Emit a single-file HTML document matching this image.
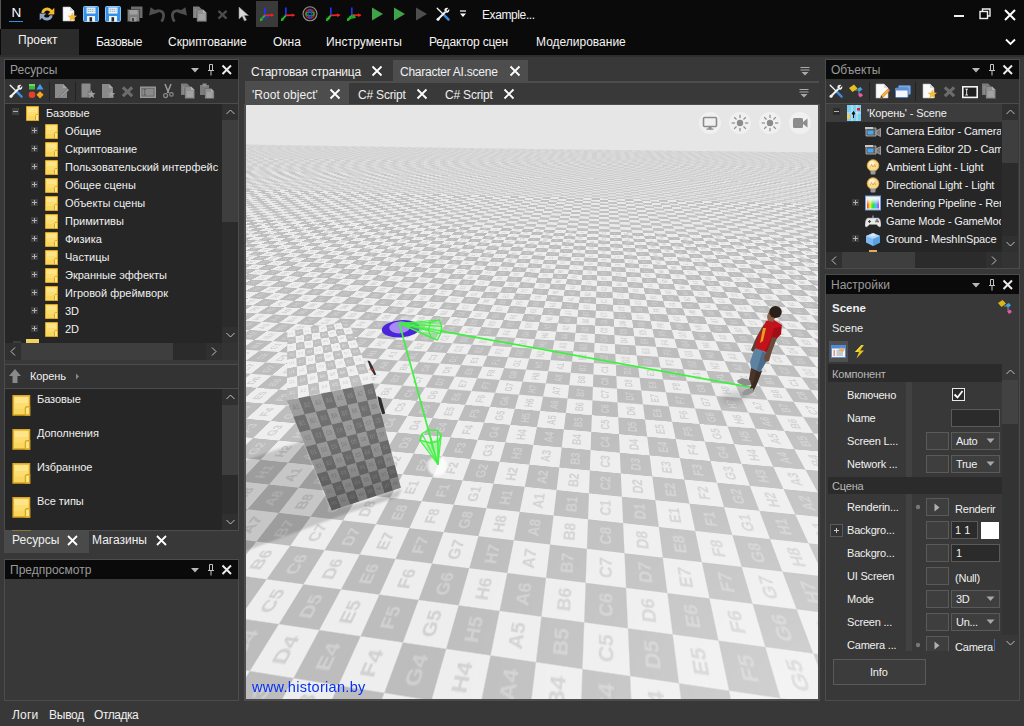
<!DOCTYPE html>
<html><head><meta charset="utf-8"><title>Editor</title>
<style>
html,body{margin:0;padding:0}
body{width:1024px;height:726px;overflow:hidden;background:#383838;position:relative;font-family:"Liberation Sans",sans-serif;font-size:11px;color:#f0f0f0}
div,span,svg{position:absolute;display:block}
.t{white-space:nowrap;line-height:16px;height:16px}
.bx p{position:relative;display:block;margin:0;height:16px;white-space:nowrap;font-size:0}
.bx b{position:relative;display:inline-block;width:16px;height:16px;line-height:16px;text-align:center;font-size:7px;font-weight:bold}
.lf p{position:relative;display:block;margin:0;height:14px;white-space:nowrap;font-size:0}
.lf b{position:relative;display:inline-block;width:14px;height:14px;line-height:14px;text-align:center;font-size:6.5px;color:#d0d0d0;font-weight:bold}
.lb p{position:relative;display:block;margin:0;height:32px;white-space:nowrap;font-size:0}
.lb b{position:relative;display:inline-block;width:32px;height:32px;line-height:32px;text-align:center;font-size:15px;color:#d0d0d0;font-weight:bold}
</style></head><body>
<div style="left:0px;top:0px;width:1024px;height:56px;background:#0a0a0a;"></div>
<div style="left:0px;top:0px;width:1px;height:29px;background:#555;"></div>
<span class="t" style="left:11.5px;top:5px;font-size:13.5px;color:#fff;">N</span>
<div style="left:9px;top:21px;width:14px;height:1px;background:#2f8fe8;"></div>
<svg style="left:38px;top:5px;" width="18" height="18" viewBox="0 0 16 16"><path d="M3 7 A5.2 5.2 0 0 1 12.5 4.5 L14.5 2.5 V8.5 H8.5 L10.8 6.2 A3 3 0 0 0 5.4 7 Z" fill="#f5b829"/><path d="M13 9 A5.2 5.2 0 0 1 3.5 11.5 L1.5 13.5 V7.5 H7.5 L5.2 9.8 A3 3 0 0 0 10.6 9 Z" fill="#8fa6c4"/></svg>
<svg style="left:61px;top:6px;" width="16" height="16" viewBox="0 0 16 16"><path d="M2 1 H9 L13 5 V15 H2 Z" fill="#fafafa" stroke="#bdbdbd" stroke-width=".6"/><path d="M9 1 V5 H13 Z" fill="#d8d8d8"/><polygon points="11.30,6.30 12.60,9.42 15.96,9.69 13.40,11.88 14.18,15.16 11.30,13.40 8.42,15.16 9.20,11.88 6.64,9.69 10.00,9.42" fill="#f6b93a"/></svg>
<svg style="left:83px;top:6px;" width="16" height="16" viewBox="0 0 16 16"><rect x="0.5" y="0.5" width="15" height="15" rx="1" fill="#3592e6" stroke="#86c4f6" stroke-width="1"/><rect x="3.5" y="1.5" width="9" height="6" fill="#f2f7fc"/><path d="M4.5 3.3 H11.5 M4.5 5.3 H11.5" stroke="#8a98a8" stroke-width=".9" stroke-dasharray="1.6 .5"/><rect x="4" y="10" width="8" height="5.5" fill="#eef3f8"/><rect x="6.5" y="11.2" width="2.6" height="4.3" fill="#262626"/></svg>
<svg style="left:105px;top:6px;" width="16" height="16" viewBox="0 0 16 16"><rect x="0.5" y="0.5" width="15" height="15" rx="1" fill="#3592e6" stroke="#86c4f6" stroke-width="1"/><rect x="3.5" y="1.5" width="9" height="6" fill="#f2f7fc"/><path d="M4.5 3.3 H11.5 M4.5 5.3 H11.5" stroke="#8a98a8" stroke-width=".9" stroke-dasharray="1.6 .5"/><rect x="4" y="10" width="8" height="5.5" fill="#eef3f8"/><rect x="6.5" y="11.2" width="2.6" height="4.3" fill="#262626"/></svg>
<svg style="left:127px;top:6px;" width="16" height="16" viewBox="0 0 16 16"><rect x="4" y="0.5" width="11.5" height="11.5" fill="#6c6c6c"/><rect x="0.5" y="3.5" width="12" height="12" fill="#7e7e7e" stroke="#333" stroke-width=".6"/><rect x="2.5" y="4" width="8" height="4.5" fill="#a0a0a0"/><rect x="3.5" y="11" width="6" height="4.5" fill="#999"/><rect x="5" y="12" width="2" height="3.5" fill="#444"/></svg>
<svg style="left:149px;top:6px;" width="16" height="16" viewBox="0 0 16 16"><path d="M5 6.5 C 9 3.2, 15 4.5, 14.6 10 C 14.4 12.5, 13.6 14, 12.6 15.6" stroke="#4e4e4e" stroke-width="2.7" fill="none"/><polygon points="0,9.6 1.6,1.2 9.6,6.6" fill="#4e4e4e"/></svg>
<svg style="left:171px;top:6px;" width="16" height="16" viewBox="0 0 16 16"><path d="M11 6.5 C 7 3.2, 1 4.5, 1.4 10 C 1.6 12.5, 2.4 14, 3.4 15.6" stroke="#4e4e4e" stroke-width="2.7" fill="none"/><polygon points="16,9.6 14.4,1.2 6.4,6.6" fill="#4e4e4e"/></svg>
<svg style="left:192px;top:6px;" width="16" height="16" viewBox="0 0 16 16"><path d="M1 0.5 H7 L10 3.5 V12 H1 Z" fill="#7c7c7c"/><path d="M2.5 4 H6 M2.5 6 H4 M2.5 8 H4 M2.5 10 H4" stroke="#a8a8a8" stroke-width=".7"/><path d="M5 3.5 H11 L14.5 7 V15.5 H5 Z" fill="#909090" stroke="#5c5c5c" stroke-width=".5"/><path d="M11 3.5 V7 H14.5 Z" fill="#b0b0b0"/><path d="M6.5 9 H13 M6.5 11 H13 M6.5 13 H13" stroke="#bcbcbc" stroke-width=".8"/></svg>
<svg style="left:216px;top:8px;" width="13" height="13" viewBox="0 0 16 16"><path d="M3 3.5 L13 13 M13 3.5 L3 13" stroke="#4c4c4c" stroke-width="2.8" fill="none"/></svg>
<svg style="left:236px;top:6px;" width="16" height="16" viewBox="0 0 16 16"><path d="M3 1 L3 13 L6.2 10.2 L8.5 15 L10.5 14 L8.2 9.5 L12.5 9.5 Z" fill="#d8d8d8" stroke="#888" stroke-width=".6"/></svg>
<div style="left:256px;top:1px;width:22px;height:26px;background:#3a3a3a;"></div>
<svg style="left:259px;top:6px;" width="16" height="16" viewBox="0 0 16 16"><path d="M5.8 9.4 L5.8 1.5" stroke="#2233ff" stroke-width="1.7"/><path d="M5.8 9.4 L14.2 9.2" stroke="#ee2222" stroke-width="1.7"/><path d="M12 7.6 L15 9.2 L12 10.8 Z" fill="#ee2222"/><path d="M5.8 9.4 L1.6 14.4" stroke="#22bb22" stroke-width="1.9"/><path d="M0.8 15.2 L1.6 11.8 L4 14 Z" fill="#22bb22"/><path d="M3.5 12.5 Q8 12.5 10.5 9.8" stroke="#2233ff" stroke-width="1" fill="none"/></svg>
<svg style="left:280px;top:6px;" width="16" height="16" viewBox="0 0 16 16"><path d="M5.8 9.4 L5.8 1.5" stroke="#2233ff" stroke-width="1.7"/><path d="M5.8 9.4 L14.2 9.2" stroke="#ee2222" stroke-width="1.7"/><path d="M12 7.6 L15 9.2 L12 10.8 Z" fill="#ee2222"/><path d="M5.8 9.4 L1.6 14.4" stroke="#22bb22" stroke-width="1.9"/><path d="M0.8 15.2 L1.6 11.8 L4 14 Z" fill="#22bb22"/></svg>
<svg style="left:302px;top:6px;" width="16" height="16" viewBox="0 0 16 16"><circle cx="8" cy="7.8" r="7" fill="#181818" stroke="#909090" stroke-width="1.1"/><circle cx="8" cy="8" r="4.2" fill="none" stroke="#cc2222" stroke-width="1.4"/><ellipse cx="8" cy="8" rx="4" ry="1.8" fill="none" stroke="#22aa22" stroke-width="1.2"/><ellipse cx="8" cy="8" rx="1.8" ry="4" fill="none" stroke="#2244ee" stroke-width="1.2"/></svg>
<svg style="left:325px;top:6px;" width="16" height="16" viewBox="0 0 16 16"><path d="M5.8 9.4 L5.8 1.5" stroke="#2233ff" stroke-width="1.7"/><path d="M5.8 9.4 L14.2 9.2" stroke="#ee2222" stroke-width="1.7"/><path d="M12 7.6 L15 9.2 L12 10.8 Z" fill="#ee2222"/><path d="M5.8 9.4 L1.6 14.4" stroke="#22bb22" stroke-width="1.9"/><path d="M0.8 15.2 L1.6 11.8 L4 14 Z" fill="#22bb22"/><path d="M1 14 L4 10 L5.5 13 Z" fill="#22bb22"/><path d="M12 7.5 L15.5 9 L12.5 11 Z" fill="#ee2222"/></svg>
<svg style="left:346px;top:6px;" width="16" height="16" viewBox="0 0 16 16"><path d="M5.8 9.4 L5.8 1.5" stroke="#2233ff" stroke-width="1.7"/><path d="M5.8 9.4 L14.2 9.2" stroke="#ee2222" stroke-width="1.7"/><path d="M12 7.6 L15 9.2 L12 10.8 Z" fill="#ee2222"/><path d="M5.8 9.4 L1.6 14.4" stroke="#22bb22" stroke-width="1.9"/><path d="M0.8 15.2 L1.6 11.8 L4 14 Z" fill="#22bb22"/><path d="M1 14 L4 10 L5.5 13 Z" fill="#22bb22"/><path d="M12 7.5 L15.5 9 L12.5 11 Z" fill="#ee2222"/><path d="M4 13 L8 8 L10 12 Z" fill="#22aa22"/></svg>
<svg style="left:369px;top:6px;" width="16" height="16" viewBox="0 0 16 16"><path d="M3 1.5 L14 8 L3 14.5 Z" fill="#3fa34a"/></svg>
<svg style="left:391px;top:6px;" width="16" height="16" viewBox="0 0 16 16"><path d="M3 1.5 L14 8 L3 14.5 Z" fill="#3fa34a"/></svg>
<svg style="left:413px;top:6px;" width="16" height="16" viewBox="0 0 16 16"><path d="M3 1.5 L14 8 L3 14.5 Z" fill="#4e4e4e"/></svg>
<svg style="left:435px;top:6px;" width="16" height="16" viewBox="0 0 16 16"><path d="M2.2 2.2 L9.5 9.5" stroke="#f4f4f4" stroke-width="1.3" stroke-linecap="round"/><path d="M9.2 9.2 L13.6 13.6" stroke="#3b8ee0" stroke-width="2.4" stroke-linecap="round"/><path d="M3 13.2 L10 6.2" stroke="#f4f4f4" stroke-width="2" stroke-linecap="round"/><path d="M9.2 4.2 A3 3 0 0 1 13.4 2 L11.4 4 L12.2 5 L14.2 3 A3 3 0 0 1 11.8 7 Z" fill="#f4f4f4"/><circle cx="3" cy="13.2" r="1.5" fill="#f4f4f4"/></svg>
<svg style="left:459px;top:10px;" width="8" height="8" viewBox="0 0 8 8"><path d="M1 1 H7" stroke="#fff" stroke-width="1.2"/><path d="M1 3.5 H7 L4 7 Z" fill="#fff"/></svg>
<span class="t" style="left:482px;top:7px;font-size:12px;color:#f2f2f2;letter-spacing:-0.4px;">Example...</span>
<div style="left:954px;top:15px;width:10px;height:2px;background:#f0f0f0;"></div>
<svg style="left:979px;top:8px;" width="12" height="12" viewBox="0 0 12 12"><rect x="1" y="3.5" width="7.5" height="7" fill="none" stroke="#f0f0f0" stroke-width="1.4"/><path d="M3.5 3 V1 H11 V8 H9" fill="none" stroke="#f0f0f0" stroke-width="1.4"/></svg>
<svg style="left:1004px;top:9px;" width="12" height="12" viewBox="0 0 12 12"><path d="M1 1 L11 11 M11 1 L1 11" stroke="#fff" stroke-width="2"/></svg>
<div style="left:1px;top:29px;width:78px;height:26px;background:#2b2b2b;"></div>
<span class="t" style="left:18px;top:32px;font-size:12px;color:#f4f4f4;">Проект</span>
<span class="t" style="left:96px;top:34px;font-size:12px;color:#f4f4f4;letter-spacing:-0.3px;">Базовые</span>
<span class="t" style="left:168px;top:34px;font-size:12px;color:#f4f4f4;letter-spacing:0px;">Скриптование</span>
<span class="t" style="left:273px;top:34px;font-size:12px;color:#f4f4f4;letter-spacing:0px;">Окна</span>
<span class="t" style="left:326px;top:34px;font-size:12px;color:#f4f4f4;letter-spacing:0.1px;">Инструменты</span>
<span class="t" style="left:429px;top:34px;font-size:12px;color:#f4f4f4;letter-spacing:-0.15px;">Редактор сцен</span>
<span class="t" style="left:536px;top:34px;font-size:12px;color:#f4f4f4;letter-spacing:0px;">Моделирование</span>
<svg style="left:1005px;top:38px;" width="11" height="8" viewBox="0 0 11 8"><path d="M1 1.5 L5.5 6 L10 1.5" stroke="#fff" stroke-width="1.8" fill="none"/></svg>
<div style="left:0px;top:55px;width:1024px;height:2px;background:#2e2e2e;"></div>
<div style="left:4px;top:59px;width:235px;height:472px;border:1px solid #4c4c4c;box-sizing:border-box;"></div>
<div style="left:5px;top:60px;width:233px;height:19px;background:#0a0a0a;"></div>
<span class="t" style="left:10px;top:62px;font-size:12px;color:#9a9a9a;">Ресурсы</span>
<svg style="left:190px;top:66px;" width="10" height="8" viewBox="0 0 10 8"><path d="M1 2 H9 L5 6.5 Z" fill="#b8b8b8"/></svg>
<svg style="left:207px;top:63px;" width="8" height="13" viewBox="0 0 8 13"><path d="M2.5 1.5 H5.5 V7.5 H2.5 Z M1 7.5 H7 M4 7.5 V12.5" stroke="#c4c4c4" stroke-width="1" fill="none"/></svg>
<svg style="left:221px;top:64px;" width="12" height="12" viewBox="0 0 12 12"><path d="M1.5 1.5 L10 10 M10 1.5 L1.5 10" stroke="#ececec" stroke-width="2" fill="none"/></svg>
<div style="left:5px;top:79px;width:233px;height:25px;background:#333333;"></div>
<div style="left:5px;top:103px;width:233px;height:1px;background:#4c4c4c;"></div>
<svg style="left:8px;top:83px;" width="16" height="16" viewBox="0 0 16 16"><path d="M2.2 2.2 L9.5 9.5" stroke="#f4f4f4" stroke-width="1.3" stroke-linecap="round"/><path d="M9.2 9.2 L13.6 13.6" stroke="#3b8ee0" stroke-width="2.4" stroke-linecap="round"/><path d="M3 13.2 L10 6.2" stroke="#f4f4f4" stroke-width="2" stroke-linecap="round"/><path d="M9.2 4.2 A3 3 0 0 1 13.4 2 L11.4 4 L12.2 5 L14.2 3 A3 3 0 0 1 11.8 7 Z" fill="#f4f4f4"/><circle cx="3" cy="13.2" r="1.5" fill="#f4f4f4"/></svg>
<svg style="left:28px;top:83px;" width="16" height="16" viewBox="0 0 16 16"><rect x="1" y="1" width="6" height="5.5" fill="#3fb63f"/><rect x="1" y="1" width="6" height="2" fill="#6fd66f"/><path d="M12 0.8 L15.6 6.5 L8.4 6.5 Z" fill="#3a9df0"/><circle cx="4" cy="11.8" r="3.3" fill="#e8402a"/><path d="M12 8.2 L15.6 11.8 L12 15.4 L8.4 11.8 Z" fill="#f4a81e"/></svg>
<div style="left:49px;top:82px;width:1px;height:19px;background:#222;"></div>
<div style="left:75px;top:82px;width:1px;height:19px;background:#222;"></div>
<svg style="left:53px;top:83px;" width="16" height="16" viewBox="0 0 16 16"><path d="M2 1 H10 L14 5 V15 H2 Z" fill="#8a8a8a"/><path d="M10 1 V5 H14" fill="#a5a5a5"/><path d="M7 13 L14.5 5.5 L16 7 L8.5 14.5 L6.5 15 Z" fill="#9a9a9a" stroke="#6a6a6a" stroke-width=".6"/></svg>
<svg style="left:80px;top:83px;" width="16" height="16" viewBox="0 0 16 16"><path d="M1.5 0.5 H10.5 V14.5 H1.5 Z" fill="#8c8c8c"/><path d="M8.5 8 H10.5 V14.5 H7.5 V9 Z" fill="#7a7a7a"/><polygon points="11.50,7.20 12.64,9.93 15.59,10.17 13.34,12.10 14.03,14.98 11.50,13.44 8.97,14.98 9.66,12.10 7.41,10.17 10.36,9.93" fill="#a0a0a0"/></svg>
<svg style="left:100px;top:83px;" width="16" height="16" viewBox="0 0 16 16"><path d="M2 1 H9 L13 5 V15 H2 Z" fill="#8a8a8a"/><path d="M9 1 V5 H13 Z" fill="#a5a5a5"/><polygon points="11.50,7.50 12.56,10.04 15.30,10.26 13.21,12.06 13.85,14.74 11.50,13.30 9.15,14.74 9.79,12.06 7.70,10.26 10.44,10.04" fill="#a0a0a0"/></svg>
<svg style="left:120px;top:84px;" width="15" height="15" viewBox="0 0 16 16"><path d="M3 3.5 L13 13 M13 3.5 L3 13" stroke="#6c6c6c" stroke-width="3.3" fill="none"/></svg>
<svg style="left:140px;top:84px;" width="16" height="16" viewBox="0 0 16 16"><rect x="0.5" y="3" width="15" height="10.5" fill="#8a8a8a" stroke="#9a9a9a" stroke-width="1"/><rect x="2" y="4.5" width="12" height="7.5" fill="none" stroke="#555" stroke-width=".5"/><path d="M3.5 5.5 H6 M3.5 11 H6 M4.75 5.5 V11" stroke="#555" stroke-width=".8" fill="none"/></svg>
<svg style="left:160px;top:83px;" width="16" height="16" viewBox="0 0 16 16"><path d="M5 1 L8.6 10 M11 1 L7.4 10" stroke="#9a9a9a" stroke-width="1.5" fill="none"/><circle cx="5.6" cy="12.6" r="2" fill="none" stroke="#8a8a8a" stroke-width="1.2"/><circle cx="11.4" cy="11.4" r="1.8" fill="none" stroke="#8a8a8a" stroke-width="1.2"/></svg>
<svg style="left:180px;top:83px;" width="16" height="16" viewBox="0 0 16 16"><path d="M1 0.5 H7 L10 3.5 V12 H1 Z" fill="#7c7c7c"/><path d="M2.5 4 H6 M2.5 6 H4 M2.5 8 H4 M2.5 10 H4" stroke="#a8a8a8" stroke-width=".7"/><path d="M5 3.5 H11 L14.5 7 V15.5 H5 Z" fill="#909090" stroke="#5c5c5c" stroke-width=".5"/><path d="M11 3.5 V7 H14.5 Z" fill="#b0b0b0"/><path d="M6.5 9 H13 M6.5 11 H13 M6.5 13 H13" stroke="#bcbcbc" stroke-width=".8"/></svg>
<svg style="left:199px;top:83px;" width="16" height="16" viewBox="0 0 16 16"><path d="M1 2 H10 V12 H1 Z" fill="#7c7c7c"/><rect x="3.5" y="0.5" width="4" height="3" fill="#909090"/><path d="M6 5.5 H12 L15 8.5 V15.5 H6 Z" fill="#909090" stroke="#5c5c5c" stroke-width=".5"/><path d="M12 5.5 V8.5 H15 Z" fill="#b0b0b0"/><path d="M7.5 10 H13.5 M7.5 12 H13.5 M7.5 14 H13.5" stroke="#bcbcbc" stroke-width=".8"/></svg>
<div style="left:5px;top:104px;width:217px;height:239px;background:#262626;"></div>
<div style="left:12px;top:108px;width:7px;height:7px;background:#3e3e3e;"></div>
<div style="left:13px;top:111px;width:5px;height:1px;background:#b0b0b0;"></div>
<svg style="left:26px;top:106px;" width="14" height="16" viewBox="0 0 14 16"><path d="M0.5 0.5 H12.5 V14.5 H0.5 Z" fill="#fad65e" stroke="#dca722" stroke-width="1"/><path d="M1.5 1.5 H11.5 V6 H1.5 Z" fill="#fee58a"/><path d="M1.5 6 H11.5 V10 H1.5 Z" fill="#fcdd72"/><path d="M10.2 8.5 H12.5 V14.5 H9.5 V9.3 Z" fill="#fde88f" stroke="#dca722" stroke-width="1"/></svg>
<span class="t" style="left:46px;top:105px;font-size:11px;color:#f0f0f0;letter-spacing:-0.1px;">Базовые</span>
<div style="left:31px;top:127px;width:7px;height:7px;background:#3e3e3e;"></div>
<div style="left:32px;top:130px;width:5px;height:1px;background:#b0b0b0;"></div>
<div style="left:34px;top:128px;width:1px;height:5px;background:#b0b0b0;"></div>
<svg style="left:45px;top:124px;" width="14" height="16" viewBox="0 0 14 16"><path d="M0.5 0.5 H12.5 V14.5 H0.5 Z" fill="#fad65e" stroke="#dca722" stroke-width="1"/><path d="M1.5 1.5 H11.5 V6 H1.5 Z" fill="#fee58a"/><path d="M1.5 6 H11.5 V10 H1.5 Z" fill="#fcdd72"/><path d="M10.2 8.5 H12.5 V14.5 H9.5 V9.3 Z" fill="#fde88f" stroke="#dca722" stroke-width="1"/></svg>
<span class="t" style="left:65px;top:123px;font-size:11px;color:#f0f0f0;letter-spacing:0px;width:155px;overflow:hidden;">Общие</span>
<div style="left:31px;top:145px;width:7px;height:7px;background:#3e3e3e;"></div>
<div style="left:32px;top:148px;width:5px;height:1px;background:#b0b0b0;"></div>
<div style="left:34px;top:146px;width:1px;height:5px;background:#b0b0b0;"></div>
<svg style="left:45px;top:142px;" width="14" height="16" viewBox="0 0 14 16"><path d="M0.5 0.5 H12.5 V14.5 H0.5 Z" fill="#fad65e" stroke="#dca722" stroke-width="1"/><path d="M1.5 1.5 H11.5 V6 H1.5 Z" fill="#fee58a"/><path d="M1.5 6 H11.5 V10 H1.5 Z" fill="#fcdd72"/><path d="M10.2 8.5 H12.5 V14.5 H9.5 V9.3 Z" fill="#fde88f" stroke="#dca722" stroke-width="1"/></svg>
<span class="t" style="left:65px;top:141px;font-size:11px;color:#f0f0f0;letter-spacing:0px;width:155px;overflow:hidden;">Скриптование</span>
<div style="left:31px;top:163px;width:7px;height:7px;background:#3e3e3e;"></div>
<div style="left:32px;top:166px;width:5px;height:1px;background:#b0b0b0;"></div>
<div style="left:34px;top:164px;width:1px;height:5px;background:#b0b0b0;"></div>
<svg style="left:45px;top:160px;" width="14" height="16" viewBox="0 0 14 16"><path d="M0.5 0.5 H12.5 V14.5 H0.5 Z" fill="#fad65e" stroke="#dca722" stroke-width="1"/><path d="M1.5 1.5 H11.5 V6 H1.5 Z" fill="#fee58a"/><path d="M1.5 6 H11.5 V10 H1.5 Z" fill="#fcdd72"/><path d="M10.2 8.5 H12.5 V14.5 H9.5 V9.3 Z" fill="#fde88f" stroke="#dca722" stroke-width="1"/></svg>
<span class="t" style="left:65px;top:159px;font-size:11px;color:#f0f0f0;letter-spacing:0px;width:155px;overflow:hidden;">Пользовательский интерфейс</span>
<div style="left:31px;top:181px;width:7px;height:7px;background:#3e3e3e;"></div>
<div style="left:32px;top:184px;width:5px;height:1px;background:#b0b0b0;"></div>
<div style="left:34px;top:182px;width:1px;height:5px;background:#b0b0b0;"></div>
<svg style="left:45px;top:178px;" width="14" height="16" viewBox="0 0 14 16"><path d="M0.5 0.5 H12.5 V14.5 H0.5 Z" fill="#fad65e" stroke="#dca722" stroke-width="1"/><path d="M1.5 1.5 H11.5 V6 H1.5 Z" fill="#fee58a"/><path d="M1.5 6 H11.5 V10 H1.5 Z" fill="#fcdd72"/><path d="M10.2 8.5 H12.5 V14.5 H9.5 V9.3 Z" fill="#fde88f" stroke="#dca722" stroke-width="1"/></svg>
<span class="t" style="left:65px;top:177px;font-size:11px;color:#f0f0f0;letter-spacing:0px;width:155px;overflow:hidden;">Общее сцены</span>
<div style="left:31px;top:199px;width:7px;height:7px;background:#3e3e3e;"></div>
<div style="left:32px;top:202px;width:5px;height:1px;background:#b0b0b0;"></div>
<div style="left:34px;top:200px;width:1px;height:5px;background:#b0b0b0;"></div>
<svg style="left:45px;top:196px;" width="14" height="16" viewBox="0 0 14 16"><path d="M0.5 0.5 H12.5 V14.5 H0.5 Z" fill="#fad65e" stroke="#dca722" stroke-width="1"/><path d="M1.5 1.5 H11.5 V6 H1.5 Z" fill="#fee58a"/><path d="M1.5 6 H11.5 V10 H1.5 Z" fill="#fcdd72"/><path d="M10.2 8.5 H12.5 V14.5 H9.5 V9.3 Z" fill="#fde88f" stroke="#dca722" stroke-width="1"/></svg>
<span class="t" style="left:65px;top:195px;font-size:11px;color:#f0f0f0;letter-spacing:0px;width:155px;overflow:hidden;">Объекты сцены</span>
<div style="left:31px;top:217px;width:7px;height:7px;background:#3e3e3e;"></div>
<div style="left:32px;top:220px;width:5px;height:1px;background:#b0b0b0;"></div>
<div style="left:34px;top:218px;width:1px;height:5px;background:#b0b0b0;"></div>
<svg style="left:45px;top:214px;" width="14" height="16" viewBox="0 0 14 16"><path d="M0.5 0.5 H12.5 V14.5 H0.5 Z" fill="#fad65e" stroke="#dca722" stroke-width="1"/><path d="M1.5 1.5 H11.5 V6 H1.5 Z" fill="#fee58a"/><path d="M1.5 6 H11.5 V10 H1.5 Z" fill="#fcdd72"/><path d="M10.2 8.5 H12.5 V14.5 H9.5 V9.3 Z" fill="#fde88f" stroke="#dca722" stroke-width="1"/></svg>
<span class="t" style="left:65px;top:213px;font-size:11px;color:#f0f0f0;letter-spacing:0px;width:155px;overflow:hidden;">Примитивы</span>
<div style="left:31px;top:235px;width:7px;height:7px;background:#3e3e3e;"></div>
<div style="left:32px;top:238px;width:5px;height:1px;background:#b0b0b0;"></div>
<div style="left:34px;top:236px;width:1px;height:5px;background:#b0b0b0;"></div>
<svg style="left:45px;top:232px;" width="14" height="16" viewBox="0 0 14 16"><path d="M0.5 0.5 H12.5 V14.5 H0.5 Z" fill="#fad65e" stroke="#dca722" stroke-width="1"/><path d="M1.5 1.5 H11.5 V6 H1.5 Z" fill="#fee58a"/><path d="M1.5 6 H11.5 V10 H1.5 Z" fill="#fcdd72"/><path d="M10.2 8.5 H12.5 V14.5 H9.5 V9.3 Z" fill="#fde88f" stroke="#dca722" stroke-width="1"/></svg>
<span class="t" style="left:65px;top:231px;font-size:11px;color:#f0f0f0;letter-spacing:0px;width:155px;overflow:hidden;">Физика</span>
<div style="left:31px;top:253px;width:7px;height:7px;background:#3e3e3e;"></div>
<div style="left:32px;top:256px;width:5px;height:1px;background:#b0b0b0;"></div>
<div style="left:34px;top:254px;width:1px;height:5px;background:#b0b0b0;"></div>
<svg style="left:45px;top:250px;" width="14" height="16" viewBox="0 0 14 16"><path d="M0.5 0.5 H12.5 V14.5 H0.5 Z" fill="#fad65e" stroke="#dca722" stroke-width="1"/><path d="M1.5 1.5 H11.5 V6 H1.5 Z" fill="#fee58a"/><path d="M1.5 6 H11.5 V10 H1.5 Z" fill="#fcdd72"/><path d="M10.2 8.5 H12.5 V14.5 H9.5 V9.3 Z" fill="#fde88f" stroke="#dca722" stroke-width="1"/></svg>
<span class="t" style="left:65px;top:249px;font-size:11px;color:#f0f0f0;letter-spacing:0px;width:155px;overflow:hidden;">Частицы</span>
<div style="left:31px;top:271px;width:7px;height:7px;background:#3e3e3e;"></div>
<div style="left:32px;top:274px;width:5px;height:1px;background:#b0b0b0;"></div>
<div style="left:34px;top:272px;width:1px;height:5px;background:#b0b0b0;"></div>
<svg style="left:45px;top:268px;" width="14" height="16" viewBox="0 0 14 16"><path d="M0.5 0.5 H12.5 V14.5 H0.5 Z" fill="#fad65e" stroke="#dca722" stroke-width="1"/><path d="M1.5 1.5 H11.5 V6 H1.5 Z" fill="#fee58a"/><path d="M1.5 6 H11.5 V10 H1.5 Z" fill="#fcdd72"/><path d="M10.2 8.5 H12.5 V14.5 H9.5 V9.3 Z" fill="#fde88f" stroke="#dca722" stroke-width="1"/></svg>
<span class="t" style="left:65px;top:267px;font-size:11px;color:#f0f0f0;letter-spacing:0px;width:155px;overflow:hidden;">Экранные эффекты</span>
<div style="left:31px;top:289px;width:7px;height:7px;background:#3e3e3e;"></div>
<div style="left:32px;top:292px;width:5px;height:1px;background:#b0b0b0;"></div>
<div style="left:34px;top:290px;width:1px;height:5px;background:#b0b0b0;"></div>
<svg style="left:45px;top:286px;" width="14" height="16" viewBox="0 0 14 16"><path d="M0.5 0.5 H12.5 V14.5 H0.5 Z" fill="#fad65e" stroke="#dca722" stroke-width="1"/><path d="M1.5 1.5 H11.5 V6 H1.5 Z" fill="#fee58a"/><path d="M1.5 6 H11.5 V10 H1.5 Z" fill="#fcdd72"/><path d="M10.2 8.5 H12.5 V14.5 H9.5 V9.3 Z" fill="#fde88f" stroke="#dca722" stroke-width="1"/></svg>
<span class="t" style="left:65px;top:285px;font-size:11px;color:#f0f0f0;letter-spacing:0px;width:155px;overflow:hidden;">Игровой фреймворк</span>
<div style="left:31px;top:307px;width:7px;height:7px;background:#3e3e3e;"></div>
<div style="left:32px;top:310px;width:5px;height:1px;background:#b0b0b0;"></div>
<div style="left:34px;top:308px;width:1px;height:5px;background:#b0b0b0;"></div>
<svg style="left:45px;top:304px;" width="14" height="16" viewBox="0 0 14 16"><path d="M0.5 0.5 H12.5 V14.5 H0.5 Z" fill="#fad65e" stroke="#dca722" stroke-width="1"/><path d="M1.5 1.5 H11.5 V6 H1.5 Z" fill="#fee58a"/><path d="M1.5 6 H11.5 V10 H1.5 Z" fill="#fcdd72"/><path d="M10.2 8.5 H12.5 V14.5 H9.5 V9.3 Z" fill="#fde88f" stroke="#dca722" stroke-width="1"/></svg>
<span class="t" style="left:65px;top:303px;font-size:11px;color:#f0f0f0;letter-spacing:0px;width:155px;overflow:hidden;">3D</span>
<div style="left:31px;top:325px;width:7px;height:7px;background:#3e3e3e;"></div>
<div style="left:32px;top:328px;width:5px;height:1px;background:#b0b0b0;"></div>
<div style="left:34px;top:326px;width:1px;height:5px;background:#b0b0b0;"></div>
<svg style="left:45px;top:322px;" width="14" height="16" viewBox="0 0 14 16"><path d="M0.5 0.5 H12.5 V14.5 H0.5 Z" fill="#fad65e" stroke="#dca722" stroke-width="1"/><path d="M1.5 1.5 H11.5 V6 H1.5 Z" fill="#fee58a"/><path d="M1.5 6 H11.5 V10 H1.5 Z" fill="#fcdd72"/><path d="M10.2 8.5 H12.5 V14.5 H9.5 V9.3 Z" fill="#fde88f" stroke="#dca722" stroke-width="1"/></svg>
<span class="t" style="left:65px;top:321px;font-size:11px;color:#f0f0f0;letter-spacing:0px;width:155px;overflow:hidden;">2D</span>
<div style="left:26px;top:339px;width:13px;height:4px;background:#f3d160;"></div>
<div style="left:13px;top:341px;width:8px;height:2px;background:#3d3d3d;"></div>
<div style="left:222px;top:104px;width:16px;height:239px;background:#2b2b2b;"></div>
<div style="left:222px;top:104px;width:16px;height:16px;background:#303030;"></div>
<div style="left:222px;top:327px;width:16px;height:16px;background:#303030;"></div>
<div style="left:222px;top:120px;width:16px;height:102px;background:#3e3e3e;"></div>
<svg style="left:226px;top:109px;" width="9" height="6" viewBox="0 0 9 6"><path d="M0.5 5 L4.5 1 L8.5 5" stroke="#c0c0c0" stroke-width="1" fill="none"/></svg>
<svg style="left:226px;top:332px;" width="9" height="6" viewBox="0 0 9 6"><path d="M0.5 1 L4.5 5 L8.5 1" stroke="#c0c0c0" stroke-width="1" fill="none"/></svg>
<div style="left:5px;top:343px;width:217px;height:17px;background:#2b2b2b;"></div>
<div style="left:5px;top:343px;width:16px;height:17px;background:#303030;"></div>
<div style="left:206px;top:343px;width:16px;height:17px;background:#303030;"></div>
<div style="left:21px;top:343px;width:152px;height:17px;background:#3e3e3e;"></div>
<svg style="left:10px;top:347px;" width="6" height="9" viewBox="0 0 6 9"><path d="M5 0.5 L1 4.5 L5 8.5" stroke="#c0c0c0" stroke-width="1" fill="none"/></svg>
<svg style="left:211px;top:347px;" width="6" height="9" viewBox="0 0 6 9"><path d="M1 0.5 L5 4.5 L1 8.5" stroke="#c0c0c0" stroke-width="1" fill="none"/></svg>
<div style="left:222px;top:343px;width:16px;height:17px;background:#333;"></div>
<div style="left:5px;top:360px;width:233px;height:5px;background:#383838;"></div>
<div style="left:5px;top:364px;width:233px;height:1px;background:#4c4c4c;"></div>
<div style="left:5px;top:365px;width:233px;height:23px;background:#333;"></div>
<svg style="left:8px;top:368px;" width="14" height="16" viewBox="0 0 14 16"><path d="M7 1 L13 8 H9.5 V15 H4.5 V8 H1 Z" fill="#8a8a8a"/></svg>
<span class="t" style="left:30px;top:368px;font-size:11px;color:#f0f0f0;letter-spacing:-0.1px;">Корень</span>
<svg style="left:75px;top:372px;" width="5" height="9" viewBox="0 0 5 9"><path d="M1 1.5 L4 4.5 L1 7.5 Z" fill="#888"/></svg>
<div style="left:5px;top:388px;width:233px;height:1px;background:#4c4c4c;"></div>
<div style="left:5px;top:389px;width:217px;height:141px;background:#262626;"></div>
<svg style="left:12px;top:395px;" width="20" height="22" viewBox="0 0 14 16"><path d="M0.5 0.5 H12.5 V14.5 H0.5 Z" fill="#fad65e" stroke="#dca722" stroke-width="1"/><path d="M1.5 1.5 H11.5 V6 H1.5 Z" fill="#fee58a"/><path d="M1.5 6 H11.5 V10 H1.5 Z" fill="#fcdd72"/><path d="M10.2 8.5 H12.5 V14.5 H9.5 V9.3 Z" fill="#fde88f" stroke="#dca722" stroke-width="1"/></svg>
<span class="t" style="left:37px;top:391px;font-size:11px;color:#f0f0f0;letter-spacing:-0.05px;">Базовые</span>
<svg style="left:12px;top:429px;" width="20" height="22" viewBox="0 0 14 16"><path d="M0.5 0.5 H12.5 V14.5 H0.5 Z" fill="#fad65e" stroke="#dca722" stroke-width="1"/><path d="M1.5 1.5 H11.5 V6 H1.5 Z" fill="#fee58a"/><path d="M1.5 6 H11.5 V10 H1.5 Z" fill="#fcdd72"/><path d="M10.2 8.5 H12.5 V14.5 H9.5 V9.3 Z" fill="#fde88f" stroke="#dca722" stroke-width="1"/></svg>
<span class="t" style="left:37px;top:425px;font-size:11px;color:#f0f0f0;letter-spacing:-0.05px;">Дополнения</span>
<svg style="left:12px;top:463px;" width="20" height="22" viewBox="0 0 14 16"><path d="M0.5 0.5 H12.5 V14.5 H0.5 Z" fill="#fad65e" stroke="#dca722" stroke-width="1"/><path d="M1.5 1.5 H11.5 V6 H1.5 Z" fill="#fee58a"/><path d="M1.5 6 H11.5 V10 H1.5 Z" fill="#fcdd72"/><path d="M10.2 8.5 H12.5 V14.5 H9.5 V9.3 Z" fill="#fde88f" stroke="#dca722" stroke-width="1"/></svg>
<span class="t" style="left:37px;top:459px;font-size:11px;color:#f0f0f0;letter-spacing:-0.05px;">Избранное</span>
<svg style="left:12px;top:497px;" width="20" height="22" viewBox="0 0 14 16"><path d="M0.5 0.5 H12.5 V14.5 H0.5 Z" fill="#fad65e" stroke="#dca722" stroke-width="1"/><path d="M1.5 1.5 H11.5 V6 H1.5 Z" fill="#fee58a"/><path d="M1.5 6 H11.5 V10 H1.5 Z" fill="#fcdd72"/><path d="M10.2 8.5 H12.5 V14.5 H9.5 V9.3 Z" fill="#fde88f" stroke="#dca722" stroke-width="1"/></svg>
<span class="t" style="left:37px;top:493px;font-size:11px;color:#f0f0f0;letter-spacing:-0.05px;">Все типы</span>
<div style="left:12px;top:530px;width:19px;height:1px;background:#8a7430;"></div>
<div style="left:222px;top:389px;width:16px;height:141px;background:#2b2b2b;"></div>
<div style="left:222px;top:389px;width:16px;height:16px;background:#303030;"></div>
<div style="left:222px;top:514px;width:16px;height:16px;background:#303030;"></div>
<div style="left:222px;top:405px;width:16px;height:70px;background:#3e3e3e;"></div>
<svg style="left:226px;top:394px;" width="9" height="6" viewBox="0 0 9 6"><path d="M0.5 5 L4.5 1 L8.5 5" stroke="#c0c0c0" stroke-width="1" fill="none"/></svg>
<svg style="left:226px;top:519px;" width="9" height="6" viewBox="0 0 9 6"><path d="M0.5 1 L4.5 5 L8.5 1" stroke="#c0c0c0" stroke-width="1" fill="none"/></svg>
<div style="left:4px;top:531px;width:85px;height:22px;background:#4a4a4a;"></div>
<span class="t" style="left:12px;top:532px;font-size:12px;color:#f0f0f0;">Ресурсы</span>
<svg style="left:67px;top:535px;" width="11" height="11" viewBox="0 0 11 11"><path d="M1 1 L10 10 M10 1 L1 10" stroke="#fff" stroke-width="1.8"/></svg>
<span class="t" style="left:92px;top:532px;font-size:12px;color:#f0f0f0;">Магазины</span>
<svg style="left:156px;top:535px;" width="11" height="11" viewBox="0 0 11 11"><path d="M1 1 L10 10 M10 1 L1 10" stroke="#fff" stroke-width="1.8"/></svg>
<div style="left:4px;top:559px;width:235px;height:142px;border:1px solid #4c4c4c;box-sizing:border-box;"></div>
<div style="left:5px;top:560px;width:233px;height:19px;background:#0a0a0a;"></div>
<span class="t" style="left:10px;top:562px;font-size:12px;color:#9a9a9a;">Предпросмотр</span>
<svg style="left:190px;top:566px;" width="10" height="8" viewBox="0 0 10 8"><path d="M1 2 H9 L5 6.5 Z" fill="#b8b8b8"/></svg>
<svg style="left:207px;top:563px;" width="8" height="13" viewBox="0 0 8 13"><path d="M2.5 1.5 H5.5 V7.5 H2.5 Z M1 7.5 H7 M4 7.5 V12.5" stroke="#c4c4c4" stroke-width="1" fill="none"/></svg>
<svg style="left:221px;top:564px;" width="12" height="12" viewBox="0 0 12 12"><path d="M1.5 1.5 L10 10 M10 1.5 L1.5 10" stroke="#ececec" stroke-width="2" fill="none"/></svg>
<span class="t" style="left:12px;top:707px;font-size:12px;color:#f0f0f0;letter-spacing:0.2px;">Логи</span>
<span class="t" style="left:49px;top:707px;font-size:12px;color:#f0f0f0;letter-spacing:-0.25px;">Вывод</span>
<span class="t" style="left:94px;top:707px;font-size:12px;color:#f0f0f0;letter-spacing:-0.45px;">Отладка</span>
<div style="left:393px;top:60px;width:135px;height:22px;background:#4d4d4d;"></div>
<div style="left:245px;top:81px;width:574px;height:2px;background:#4d4d4d;"></div>
<div style="left:245px;top:83px;width:574px;height:22px;background:#393939;"></div>
<div style="left:245px;top:83px;width:104px;height:22px;background:#4d4d4d;"></div>
<span class="t" style="left:251px;top:64px;font-size:12px;color:#f0f0f0;letter-spacing:-0.2px;">Стартовая страница</span>
<svg style="left:371px;top:65px;" width="12" height="12" viewBox="0 0 12 12"><path d="M1.5 1.5 L10.5 10.5 M10.5 1.5 L1.5 10.5" stroke="#fff" stroke-width="1.8"/></svg>
<span class="t" style="left:400px;top:64px;font-size:12px;color:#f0f0f0;letter-spacing:-0.25px;">Character AI.scene</span>
<svg style="left:508.5px;top:65px;" width="12" height="12" viewBox="0 0 12 12"><path d="M1.5 1.5 L10.5 10.5 M10.5 1.5 L1.5 10.5" stroke="#fff" stroke-width="1.8"/></svg>
<span class="t" style="left:252px;top:87px;font-size:12px;color:#f0f0f0;letter-spacing:0.05px;">'Root object'</span>
<svg style="left:329px;top:88px;" width="12" height="12" viewBox="0 0 12 12"><path d="M1.5 1.5 L10.5 10.5 M10.5 1.5 L1.5 10.5" stroke="#fff" stroke-width="1.8"/></svg>
<span class="t" style="left:358px;top:87px;font-size:12px;color:#f0f0f0;letter-spacing:-0.2px;">C# Script</span>
<svg style="left:416px;top:88px;" width="12" height="12" viewBox="0 0 12 12"><path d="M1.5 1.5 L10.5 10.5 M10.5 1.5 L1.5 10.5" stroke="#fff" stroke-width="1.8"/></svg>
<span class="t" style="left:445px;top:87px;font-size:12px;color:#f0f0f0;letter-spacing:-0.2px;">C# Script</span>
<svg style="left:503px;top:88px;" width="12" height="12" viewBox="0 0 12 12"><path d="M1.5 1.5 L10.5 10.5 M10.5 1.5 L1.5 10.5" stroke="#fff" stroke-width="1.8"/></svg>
<svg style="left:800px;top:66px;" width="10" height="10" viewBox="0 0 10 10"><path d="M0.5 1.5 H9.5 M0.5 4 H9.5" stroke="#aaa" stroke-width="1.2"/><path d="M1.5 6 H8.5 L5 9.5 Z" fill="#aaa"/></svg>
<svg style="left:799px;top:88px;" width="10" height="10" viewBox="0 0 10 10"><path d="M0.5 1.5 H9.5 M0.5 4 H9.5" stroke="#aaa" stroke-width="1.2"/><path d="M1.5 6 H8.5 L5 9.5 Z" fill="#aaa"/></svg>
<div style="left:244px;top:104px;width:576px;height:597px;background:#4d4d4d;"></div>
<div style="left:246px;top:105px;width:572px;height:594px;overflow:hidden;background:#e6e6e6">
<div style="left:0;top:0;width:572px;height:594px;clip-path:polygon(0 39.5px,286px 44px,572px 47.5px,572px 594px,0 594px);background:#d6d6d6">
<div style="left:0;top:0;width:770px;height:32px;transform-origin:0 0;transform:matrix3d(0.680677223,0.00120821612,0,-0.000193460997,-2.52157193,0.0440392772,0,-0.00705162129,0,0,1,0,-15.2638042,38.9199269,0,1);background:conic-gradient(#eeeeee 25%,#bdbdbd 0 50%,#eeeeee 0 75%,#bdbdbd 0) 0 0/10px 2px;opacity:.18;"></div>
<div style="left:0;top:0;width:696px;height:20px;transform-origin:0 0;transform:matrix3d(0.741249743,0.00131573359,0,-0.000210676823,-3.29515573,0.0575499256,0,-0.00921496232,0,0,1,0,-12.0612397,52.7759919,0,1);background:conic-gradient(#eeeeee 25%,#bdbdbd 0 50%,#eeeeee 0 75%,#bdbdbd 0) 0 0/12px 2px;opacity:.3;"></div>
<div style="left:0;top:0;width:686px;height:18px;transform-origin:0 0;transform:matrix3d(0.775807625,0.00137707454,0,-0.000220498809,-4.02357612,0.0702717944,0,-0.011252003,0,0,1,0,-21.9840024,65.8231113,0,1);background:conic-gradient(#eeeeee 25%,#bdbdbd 0 50%,#eeeeee 0 75%,#bdbdbd 0) 0 0/14px 2px;opacity:.48;"></div>
<div style="left:0;top:0;width:800px;height:36px;transform-origin:0 0;transform:matrix3d(0.677606854,0.00120276615,0,-0.000192588342,-2.51019773,0.0438406268,0,-0.00701981314,0,0,1,0,-26.4439257,83.677665,0,1);background:conic-gradient(#eeeeee 25%,#bdbdbd 0 50%,#eeeeee 0 75%,#bdbdbd 0) 0 0/20px 4px;opacity:.8;"></div>
<div style="left:0;top:0;width:744px;height:56px;transform-origin:0 0;transform:matrix3d(0.750639203,0.00133240008,0,-0.00021334548,-1.66844785,0.0291394572,0,-0.00466584443,0,0,1,0,-33.8414738,113.292506,0,1);background:conic-gradient(#eeeeee 25%,#bdbdbd 0 50%,#eeeeee 0 75%,#bdbdbd 0) 0 0/24px 8px;"></div>
<div style="left:0;top:0;width:768px;height:60px;transform-origin:0 0;transform:matrix3d(0.750201076,0.00133162239,0,-0.000213220956,-1.48219913,0.0258866216,0,-0.00414499654,0,0,1,0,-31.7817936,153.045404,0,1);background:conic-gradient(#eeeeee 25%,#bdbdbd 0 50%,#eeeeee 0 75%,#bdbdbd 0) 0 0/32px 12px;"></div>
<div style="left:0;top:0;width:912px;height:120px;transform-origin:0 0;transform:matrix3d(0.640728493,0.0011373063,0,-0.000182106833,-0.949432669,0.0165818504,0,-0.00265510555,0,0,1,0,-39.5967187,197.824165,0,1);background:conic-gradient(#eeeeee 25%,#bdbdbd 0 50%,#eeeeee 0 75%,#bdbdbd 0) 0 0/48px 24px;"></div>
<div style="left:0;top:0;width:896px;height:448px;transform-origin:0 0;transform:matrix3d(0.66845932,0.00118652909,0,-0.000189988444,-0.49526213,0.00864975771,0,-0.00138500946,0,0,1,0,-53.5235435,277.623518,0,1);background:conic-gradient(#eeeeee 25%,#bdbdbd 0 50%,#eeeeee 0 75%,#bdbdbd 0) 0 0/64px 64px;"></div>
<div class="lf" style="left:0;top:0;width:336px;height:924px;transform-origin:0 0;transform:matrix3d(0.888174668,-0.0155119789,0,0.00248379645,1.19877656,0.00212785314,0,-0.000340714368,0,0,1,0,-260.782066,216.474599,0,1)">
<p><b>B2</b><b>B3</b><b>B4</b><b>B5</b><b>B6</b><b>B7</b><b>B8</b><b>B1</b><b>B2</b><b>B3</b><b>B4</b><b>B5</b><b>B6</b><b>B7</b><b>B8</b><b>B1</b><b>B2</b><b>B3</b><b>B4</b><b>B5</b><b>B6</b><b>B7</b><b>B8</b><b>B1</b></p>
<p><b>C2</b><b>C3</b><b>C4</b><b>C5</b><b>C6</b><b>C7</b><b>C8</b><b>C1</b><b>C2</b><b>C3</b><b>C4</b><b>C5</b><b>C6</b><b>C7</b><b>C8</b><b>C1</b><b>C2</b><b>C3</b><b>C4</b><b>C5</b><b>C6</b><b>C7</b><b>C8</b><b>C1</b></p>
<p><b>D2</b><b>D3</b><b>D4</b><b>D5</b><b>D6</b><b>D7</b><b>D8</b><b>D1</b><b>D2</b><b>D3</b><b>D4</b><b>D5</b><b>D6</b><b>D7</b><b>D8</b><b>D1</b><b>D2</b><b>D3</b><b>D4</b><b>D5</b><b>D6</b><b>D7</b><b>D8</b><b>D1</b></p>
<p><b>E2</b><b>E3</b><b>E4</b><b>E5</b><b>E6</b><b>E7</b><b>E8</b><b>E1</b><b>E2</b><b>E3</b><b>E4</b><b>E5</b><b>E6</b><b>E7</b><b>E8</b><b>E1</b><b>E2</b><b>E3</b><b>E4</b><b>E5</b><b>E6</b><b>E7</b><b>E8</b><b>E1</b></p>
<p><b>F2</b><b>F3</b><b>F4</b><b>F5</b><b>F6</b><b>F7</b><b>F8</b><b>F1</b><b>F2</b><b>F3</b><b>F4</b><b>F5</b><b>F6</b><b>F7</b><b>F8</b><b>F1</b><b>F2</b><b>F3</b><b>F4</b><b>F5</b><b>F6</b><b>F7</b><b>F8</b><b>F1</b></p>
<p><b>G2</b><b>G3</b><b>G4</b><b>G5</b><b>G6</b><b>G7</b><b>G8</b><b>G1</b><b>G2</b><b>G3</b><b>G4</b><b>G5</b><b>G6</b><b>G7</b><b>G8</b><b>G1</b><b>G2</b><b>G3</b><b>G4</b><b>G5</b><b>G6</b><b>G7</b><b>G8</b><b>G1</b></p>
<p><b>H2</b><b>H3</b><b>H4</b><b>H5</b><b>H6</b><b>H7</b><b>H8</b><b>H1</b><b>H2</b><b>H3</b><b>H4</b><b>H5</b><b>H6</b><b>H7</b><b>H8</b><b>H1</b><b>H2</b><b>H3</b><b>H4</b><b>H5</b><b>H6</b><b>H7</b><b>H8</b><b>H1</b></p>
<p><b>A2</b><b>A3</b><b>A4</b><b>A5</b><b>A6</b><b>A7</b><b>A8</b><b>A1</b><b>A2</b><b>A3</b><b>A4</b><b>A5</b><b>A6</b><b>A7</b><b>A8</b><b>A1</b><b>A2</b><b>A3</b><b>A4</b><b>A5</b><b>A6</b><b>A7</b><b>A8</b><b>A1</b></p>
<p><b>B2</b><b>B3</b><b>B4</b><b>B5</b><b>B6</b><b>B7</b><b>B8</b><b>B1</b><b>B2</b><b>B3</b><b>B4</b><b>B5</b><b>B6</b><b>B7</b><b>B8</b><b>B1</b><b>B2</b><b>B3</b><b>B4</b><b>B5</b><b>B6</b><b>B7</b><b>B8</b><b>B1</b></p>
<p><b>C2</b><b>C3</b><b>C4</b><b>C5</b><b>C6</b><b>C7</b><b>C8</b><b>C1</b><b>C2</b><b>C3</b><b>C4</b><b>C5</b><b>C6</b><b>C7</b><b>C8</b><b>C1</b><b>C2</b><b>C3</b><b>C4</b><b>C5</b><b>C6</b><b>C7</b><b>C8</b><b>C1</b></p>
<p><b>D2</b><b>D3</b><b>D4</b><b>D5</b><b>D6</b><b>D7</b><b>D8</b><b>D1</b><b>D2</b><b>D3</b><b>D4</b><b>D5</b><b>D6</b><b>D7</b><b>D8</b><b>D1</b><b>D2</b><b>D3</b><b>D4</b><b>D5</b><b>D6</b><b>D7</b><b>D8</b><b>D1</b></p>
<p><b>E2</b><b>E3</b><b>E4</b><b>E5</b><b>E6</b><b>E7</b><b>E8</b><b>E1</b><b>E2</b><b>E3</b><b>E4</b><b>E5</b><b>E6</b><b>E7</b><b>E8</b><b>E1</b><b>E2</b><b>E3</b><b>E4</b><b>E5</b><b>E6</b><b>E7</b><b>E8</b><b>E1</b></p>
<p><b>F2</b><b>F3</b><b>F4</b><b>F5</b><b>F6</b><b>F7</b><b>F8</b><b>F1</b><b>F2</b><b>F3</b><b>F4</b><b>F5</b><b>F6</b><b>F7</b><b>F8</b><b>F1</b><b>F2</b><b>F3</b><b>F4</b><b>F5</b><b>F6</b><b>F7</b><b>F8</b><b>F1</b></p>
<p><b>G2</b><b>G3</b><b>G4</b><b>G5</b><b>G6</b><b>G7</b><b>G8</b><b>G1</b><b>G2</b><b>G3</b><b>G4</b><b>G5</b><b>G6</b><b>G7</b><b>G8</b><b>G1</b><b>G2</b><b>G3</b><b>G4</b><b>G5</b><b>G6</b><b>G7</b><b>G8</b><b>G1</b></p>
<p><b>H2</b><b>H3</b><b>H4</b><b>H5</b><b>H6</b><b>H7</b><b>H8</b><b>H1</b><b>H2</b><b>H3</b><b>H4</b><b>H5</b><b>H6</b><b>H7</b><b>H8</b><b>H1</b><b>H2</b><b>H3</b><b>H4</b><b>H5</b><b>H6</b><b>H7</b><b>H8</b><b>H1</b></p>
<p><b>A2</b><b>A3</b><b>A4</b><b>A5</b><b>A6</b><b>A7</b><b>A8</b><b>A1</b><b>A2</b><b>A3</b><b>A4</b><b>A5</b><b>A6</b><b>A7</b><b>A8</b><b>A1</b><b>A2</b><b>A3</b><b>A4</b><b>A5</b><b>A6</b><b>A7</b><b>A8</b><b>A1</b></p>
<p><b>B2</b><b>B3</b><b>B4</b><b>B5</b><b>B6</b><b>B7</b><b>B8</b><b>B1</b><b>B2</b><b>B3</b><b>B4</b><b>B5</b><b>B6</b><b>B7</b><b>B8</b><b>B1</b><b>B2</b><b>B3</b><b>B4</b><b>B5</b><b>B6</b><b>B7</b><b>B8</b><b>B1</b></p>
<p><b>C2</b><b>C3</b><b>C4</b><b>C5</b><b>C6</b><b>C7</b><b>C8</b><b>C1</b><b>C2</b><b>C3</b><b>C4</b><b>C5</b><b>C6</b><b>C7</b><b>C8</b><b>C1</b><b>C2</b><b>C3</b><b>C4</b><b>C5</b><b>C6</b><b>C7</b><b>C8</b><b>C1</b></p>
<p><b>D2</b><b>D3</b><b>D4</b><b>D5</b><b>D6</b><b>D7</b><b>D8</b><b>D1</b><b>D2</b><b>D3</b><b>D4</b><b>D5</b><b>D6</b><b>D7</b><b>D8</b><b>D1</b><b>D2</b><b>D3</b><b>D4</b><b>D5</b><b>D6</b><b>D7</b><b>D8</b><b>D1</b></p>
<p><b>E2</b><b>E3</b><b>E4</b><b>E5</b><b>E6</b><b>E7</b><b>E8</b><b>E1</b><b>E2</b><b>E3</b><b>E4</b><b>E5</b><b>E6</b><b>E7</b><b>E8</b><b>E1</b><b>E2</b><b>E3</b><b>E4</b><b>E5</b><b>E6</b><b>E7</b><b>E8</b><b>E1</b></p>
<p><b>F2</b><b>F3</b><b>F4</b><b>F5</b><b>F6</b><b>F7</b><b>F8</b><b>F1</b><b>F2</b><b>F3</b><b>F4</b><b>F5</b><b>F6</b><b>F7</b><b>F8</b><b>F1</b><b>F2</b><b>F3</b><b>F4</b><b>F5</b><b>F6</b><b>F7</b><b>F8</b><b>F1</b></p>
<p><b>G2</b><b>G3</b><b>G4</b><b>G5</b><b>G6</b><b>G7</b><b>G8</b><b>G1</b><b>G2</b><b>G3</b><b>G4</b><b>G5</b><b>G6</b><b>G7</b><b>G8</b><b>G1</b><b>G2</b><b>G3</b><b>G4</b><b>G5</b><b>G6</b><b>G7</b><b>G8</b><b>G1</b></p>
<p><b>H2</b><b>H3</b><b>H4</b><b>H5</b><b>H6</b><b>H7</b><b>H8</b><b>H1</b><b>H2</b><b>H3</b><b>H4</b><b>H5</b><b>H6</b><b>H7</b><b>H8</b><b>H1</b><b>H2</b><b>H3</b><b>H4</b><b>H5</b><b>H6</b><b>H7</b><b>H8</b><b>H1</b></p>
<p><b>A2</b><b>A3</b><b>A4</b><b>A5</b><b>A6</b><b>A7</b><b>A8</b><b>A1</b><b>A2</b><b>A3</b><b>A4</b><b>A5</b><b>A6</b><b>A7</b><b>A8</b><b>A1</b><b>A2</b><b>A3</b><b>A4</b><b>A5</b><b>A6</b><b>A7</b><b>A8</b><b>A1</b></p>
<p><b>B2</b><b>B3</b><b>B4</b><b>B5</b><b>B6</b><b>B7</b><b>B8</b><b>B1</b><b>B2</b><b>B3</b><b>B4</b><b>B5</b><b>B6</b><b>B7</b><b>B8</b><b>B1</b><b>B2</b><b>B3</b><b>B4</b><b>B5</b><b>B6</b><b>B7</b><b>B8</b><b>B1</b></p>
<p><b>C2</b><b>C3</b><b>C4</b><b>C5</b><b>C6</b><b>C7</b><b>C8</b><b>C1</b><b>C2</b><b>C3</b><b>C4</b><b>C5</b><b>C6</b><b>C7</b><b>C8</b><b>C1</b><b>C2</b><b>C3</b><b>C4</b><b>C5</b><b>C6</b><b>C7</b><b>C8</b><b>C1</b></p>
<p><b>D2</b><b>D3</b><b>D4</b><b>D5</b><b>D6</b><b>D7</b><b>D8</b><b>D1</b><b>D2</b><b>D3</b><b>D4</b><b>D5</b><b>D6</b><b>D7</b><b>D8</b><b>D1</b><b>D2</b><b>D3</b><b>D4</b><b>D5</b><b>D6</b><b>D7</b><b>D8</b><b>D1</b></p>
<p><b>E2</b><b>E3</b><b>E4</b><b>E5</b><b>E6</b><b>E7</b><b>E8</b><b>E1</b><b>E2</b><b>E3</b><b>E4</b><b>E5</b><b>E6</b><b>E7</b><b>E8</b><b>E1</b><b>E2</b><b>E3</b><b>E4</b><b>E5</b><b>E6</b><b>E7</b><b>E8</b><b>E1</b></p>
<p><b>F2</b><b>F3</b><b>F4</b><b>F5</b><b>F6</b><b>F7</b><b>F8</b><b>F1</b><b>F2</b><b>F3</b><b>F4</b><b>F5</b><b>F6</b><b>F7</b><b>F8</b><b>F1</b><b>F2</b><b>F3</b><b>F4</b><b>F5</b><b>F6</b><b>F7</b><b>F8</b><b>F1</b></p>
<p><b>G2</b><b>G3</b><b>G4</b><b>G5</b><b>G6</b><b>G7</b><b>G8</b><b>G1</b><b>G2</b><b>G3</b><b>G4</b><b>G5</b><b>G6</b><b>G7</b><b>G8</b><b>G1</b><b>G2</b><b>G3</b><b>G4</b><b>G5</b><b>G6</b><b>G7</b><b>G8</b><b>G1</b></p>
<p><b>H2</b><b>H3</b><b>H4</b><b>H5</b><b>H6</b><b>H7</b><b>H8</b><b>H1</b><b>H2</b><b>H3</b><b>H4</b><b>H5</b><b>H6</b><b>H7</b><b>H8</b><b>H1</b><b>H2</b><b>H3</b><b>H4</b><b>H5</b><b>H6</b><b>H7</b><b>H8</b><b>H1</b></p>
<p><b>A2</b><b>A3</b><b>A4</b><b>A5</b><b>A6</b><b>A7</b><b>A8</b><b>A1</b><b>A2</b><b>A3</b><b>A4</b><b>A5</b><b>A6</b><b>A7</b><b>A8</b><b>A1</b><b>A2</b><b>A3</b><b>A4</b><b>A5</b><b>A6</b><b>A7</b><b>A8</b><b>A1</b></p>
<p><b>B2</b><b>B3</b><b>B4</b><b>B5</b><b>B6</b><b>B7</b><b>B8</b><b>B1</b><b>B2</b><b>B3</b><b>B4</b><b>B5</b><b>B6</b><b>B7</b><b>B8</b><b>B1</b><b>B2</b><b>B3</b><b>B4</b><b>B5</b><b>B6</b><b>B7</b><b>B8</b><b>B1</b></p>
<p><b>C2</b><b>C3</b><b>C4</b><b>C5</b><b>C6</b><b>C7</b><b>C8</b><b>C1</b><b>C2</b><b>C3</b><b>C4</b><b>C5</b><b>C6</b><b>C7</b><b>C8</b><b>C1</b><b>C2</b><b>C3</b><b>C4</b><b>C5</b><b>C6</b><b>C7</b><b>C8</b><b>C1</b></p>
<p><b>D2</b><b>D3</b><b>D4</b><b>D5</b><b>D6</b><b>D7</b><b>D8</b><b>D1</b><b>D2</b><b>D3</b><b>D4</b><b>D5</b><b>D6</b><b>D7</b><b>D8</b><b>D1</b><b>D2</b><b>D3</b><b>D4</b><b>D5</b><b>D6</b><b>D7</b><b>D8</b><b>D1</b></p>
<p><b>E2</b><b>E3</b><b>E4</b><b>E5</b><b>E6</b><b>E7</b><b>E8</b><b>E1</b><b>E2</b><b>E3</b><b>E4</b><b>E5</b><b>E6</b><b>E7</b><b>E8</b><b>E1</b><b>E2</b><b>E3</b><b>E4</b><b>E5</b><b>E6</b><b>E7</b><b>E8</b><b>E1</b></p>
<p><b>F2</b><b>F3</b><b>F4</b><b>F5</b><b>F6</b><b>F7</b><b>F8</b><b>F1</b><b>F2</b><b>F3</b><b>F4</b><b>F5</b><b>F6</b><b>F7</b><b>F8</b><b>F1</b><b>F2</b><b>F3</b><b>F4</b><b>F5</b><b>F6</b><b>F7</b><b>F8</b><b>F1</b></p>
<p><b>G2</b><b>G3</b><b>G4</b><b>G5</b><b>G6</b><b>G7</b><b>G8</b><b>G1</b><b>G2</b><b>G3</b><b>G4</b><b>G5</b><b>G6</b><b>G7</b><b>G8</b><b>G1</b><b>G2</b><b>G3</b><b>G4</b><b>G5</b><b>G6</b><b>G7</b><b>G8</b><b>G1</b></p>
<p><b>H2</b><b>H3</b><b>H4</b><b>H5</b><b>H6</b><b>H7</b><b>H8</b><b>H1</b><b>H2</b><b>H3</b><b>H4</b><b>H5</b><b>H6</b><b>H7</b><b>H8</b><b>H1</b><b>H2</b><b>H3</b><b>H4</b><b>H5</b><b>H6</b><b>H7</b><b>H8</b><b>H1</b></p>
<p><b>A2</b><b>A3</b><b>A4</b><b>A5</b><b>A6</b><b>A7</b><b>A8</b><b>A1</b><b>A2</b><b>A3</b><b>A4</b><b>A5</b><b>A6</b><b>A7</b><b>A8</b><b>A1</b><b>A2</b><b>A3</b><b>A4</b><b>A5</b><b>A6</b><b>A7</b><b>A8</b><b>A1</b></p>
<p><b>B2</b><b>B3</b><b>B4</b><b>B5</b><b>B6</b><b>B7</b><b>B8</b><b>B1</b><b>B2</b><b>B3</b><b>B4</b><b>B5</b><b>B6</b><b>B7</b><b>B8</b><b>B1</b><b>B2</b><b>B3</b><b>B4</b><b>B5</b><b>B6</b><b>B7</b><b>B8</b><b>B1</b></p>
<p><b>C2</b><b>C3</b><b>C4</b><b>C5</b><b>C6</b><b>C7</b><b>C8</b><b>C1</b><b>C2</b><b>C3</b><b>C4</b><b>C5</b><b>C6</b><b>C7</b><b>C8</b><b>C1</b><b>C2</b><b>C3</b><b>C4</b><b>C5</b><b>C6</b><b>C7</b><b>C8</b><b>C1</b></p>
<p><b>D2</b><b>D3</b><b>D4</b><b>D5</b><b>D6</b><b>D7</b><b>D8</b><b>D1</b><b>D2</b><b>D3</b><b>D4</b><b>D5</b><b>D6</b><b>D7</b><b>D8</b><b>D1</b><b>D2</b><b>D3</b><b>D4</b><b>D5</b><b>D6</b><b>D7</b><b>D8</b><b>D1</b></p>
<p><b>E2</b><b>E3</b><b>E4</b><b>E5</b><b>E6</b><b>E7</b><b>E8</b><b>E1</b><b>E2</b><b>E3</b><b>E4</b><b>E5</b><b>E6</b><b>E7</b><b>E8</b><b>E1</b><b>E2</b><b>E3</b><b>E4</b><b>E5</b><b>E6</b><b>E7</b><b>E8</b><b>E1</b></p>
<p><b>F2</b><b>F3</b><b>F4</b><b>F5</b><b>F6</b><b>F7</b><b>F8</b><b>F1</b><b>F2</b><b>F3</b><b>F4</b><b>F5</b><b>F6</b><b>F7</b><b>F8</b><b>F1</b><b>F2</b><b>F3</b><b>F4</b><b>F5</b><b>F6</b><b>F7</b><b>F8</b><b>F1</b></p>
<p><b>G2</b><b>G3</b><b>G4</b><b>G5</b><b>G6</b><b>G7</b><b>G8</b><b>G1</b><b>G2</b><b>G3</b><b>G4</b><b>G5</b><b>G6</b><b>G7</b><b>G8</b><b>G1</b><b>G2</b><b>G3</b><b>G4</b><b>G5</b><b>G6</b><b>G7</b><b>G8</b><b>G1</b></p>
<p><b>H2</b><b>H3</b><b>H4</b><b>H5</b><b>H6</b><b>H7</b><b>H8</b><b>H1</b><b>H2</b><b>H3</b><b>H4</b><b>H5</b><b>H6</b><b>H7</b><b>H8</b><b>H1</b><b>H2</b><b>H3</b><b>H4</b><b>H5</b><b>H6</b><b>H7</b><b>H8</b><b>H1</b></p>
<p><b>A2</b><b>A3</b><b>A4</b><b>A5</b><b>A6</b><b>A7</b><b>A8</b><b>A1</b><b>A2</b><b>A3</b><b>A4</b><b>A5</b><b>A6</b><b>A7</b><b>A8</b><b>A1</b><b>A2</b><b>A3</b><b>A4</b><b>A5</b><b>A6</b><b>A7</b><b>A8</b><b>A1</b></p>
<p><b>B2</b><b>B3</b><b>B4</b><b>B5</b><b>B6</b><b>B7</b><b>B8</b><b>B1</b><b>B2</b><b>B3</b><b>B4</b><b>B5</b><b>B6</b><b>B7</b><b>B8</b><b>B1</b><b>B2</b><b>B3</b><b>B4</b><b>B5</b><b>B6</b><b>B7</b><b>B8</b><b>B1</b></p>
<p><b>C2</b><b>C3</b><b>C4</b><b>C5</b><b>C6</b><b>C7</b><b>C8</b><b>C1</b><b>C2</b><b>C3</b><b>C4</b><b>C5</b><b>C6</b><b>C7</b><b>C8</b><b>C1</b><b>C2</b><b>C3</b><b>C4</b><b>C5</b><b>C6</b><b>C7</b><b>C8</b><b>C1</b></p>
<p><b>D2</b><b>D3</b><b>D4</b><b>D5</b><b>D6</b><b>D7</b><b>D8</b><b>D1</b><b>D2</b><b>D3</b><b>D4</b><b>D5</b><b>D6</b><b>D7</b><b>D8</b><b>D1</b><b>D2</b><b>D3</b><b>D4</b><b>D5</b><b>D6</b><b>D7</b><b>D8</b><b>D1</b></p>
<p><b>E2</b><b>E3</b><b>E4</b><b>E5</b><b>E6</b><b>E7</b><b>E8</b><b>E1</b><b>E2</b><b>E3</b><b>E4</b><b>E5</b><b>E6</b><b>E7</b><b>E8</b><b>E1</b><b>E2</b><b>E3</b><b>E4</b><b>E5</b><b>E6</b><b>E7</b><b>E8</b><b>E1</b></p>
<p><b>F2</b><b>F3</b><b>F4</b><b>F5</b><b>F6</b><b>F7</b><b>F8</b><b>F1</b><b>F2</b><b>F3</b><b>F4</b><b>F5</b><b>F6</b><b>F7</b><b>F8</b><b>F1</b><b>F2</b><b>F3</b><b>F4</b><b>F5</b><b>F6</b><b>F7</b><b>F8</b><b>F1</b></p>
<p><b>G2</b><b>G3</b><b>G4</b><b>G5</b><b>G6</b><b>G7</b><b>G8</b><b>G1</b><b>G2</b><b>G3</b><b>G4</b><b>G5</b><b>G6</b><b>G7</b><b>G8</b><b>G1</b><b>G2</b><b>G3</b><b>G4</b><b>G5</b><b>G6</b><b>G7</b><b>G8</b><b>G1</b></p>
<p><b>H2</b><b>H3</b><b>H4</b><b>H5</b><b>H6</b><b>H7</b><b>H8</b><b>H1</b><b>H2</b><b>H3</b><b>H4</b><b>H5</b><b>H6</b><b>H7</b><b>H8</b><b>H1</b><b>H2</b><b>H3</b><b>H4</b><b>H5</b><b>H6</b><b>H7</b><b>H8</b><b>H1</b></p>
<p><b>A2</b><b>A3</b><b>A4</b><b>A5</b><b>A6</b><b>A7</b><b>A8</b><b>A1</b><b>A2</b><b>A3</b><b>A4</b><b>A5</b><b>A6</b><b>A7</b><b>A8</b><b>A1</b><b>A2</b><b>A3</b><b>A4</b><b>A5</b><b>A6</b><b>A7</b><b>A8</b><b>A1</b></p>
<p><b>B2</b><b>B3</b><b>B4</b><b>B5</b><b>B6</b><b>B7</b><b>B8</b><b>B1</b><b>B2</b><b>B3</b><b>B4</b><b>B5</b><b>B6</b><b>B7</b><b>B8</b><b>B1</b><b>B2</b><b>B3</b><b>B4</b><b>B5</b><b>B6</b><b>B7</b><b>B8</b><b>B1</b></p>
<p><b>C2</b><b>C3</b><b>C4</b><b>C5</b><b>C6</b><b>C7</b><b>C8</b><b>C1</b><b>C2</b><b>C3</b><b>C4</b><b>C5</b><b>C6</b><b>C7</b><b>C8</b><b>C1</b><b>C2</b><b>C3</b><b>C4</b><b>C5</b><b>C6</b><b>C7</b><b>C8</b><b>C1</b></p>
<p><b>D2</b><b>D3</b><b>D4</b><b>D5</b><b>D6</b><b>D7</b><b>D8</b><b>D1</b><b>D2</b><b>D3</b><b>D4</b><b>D5</b><b>D6</b><b>D7</b><b>D8</b><b>D1</b><b>D2</b><b>D3</b><b>D4</b><b>D5</b><b>D6</b><b>D7</b><b>D8</b><b>D1</b></p>
<p><b>E2</b><b>E3</b><b>E4</b><b>E5</b><b>E6</b><b>E7</b><b>E8</b><b>E1</b><b>E2</b><b>E3</b><b>E4</b><b>E5</b><b>E6</b><b>E7</b><b>E8</b><b>E1</b><b>E2</b><b>E3</b><b>E4</b><b>E5</b><b>E6</b><b>E7</b><b>E8</b><b>E1</b></p>
<p><b>F2</b><b>F3</b><b>F4</b><b>F5</b><b>F6</b><b>F7</b><b>F8</b><b>F1</b><b>F2</b><b>F3</b><b>F4</b><b>F5</b><b>F6</b><b>F7</b><b>F8</b><b>F1</b><b>F2</b><b>F3</b><b>F4</b><b>F5</b><b>F6</b><b>F7</b><b>F8</b><b>F1</b></p>
<p><b>G2</b><b>G3</b><b>G4</b><b>G5</b><b>G6</b><b>G7</b><b>G8</b><b>G1</b><b>G2</b><b>G3</b><b>G4</b><b>G5</b><b>G6</b><b>G7</b><b>G8</b><b>G1</b><b>G2</b><b>G3</b><b>G4</b><b>G5</b><b>G6</b><b>G7</b><b>G8</b><b>G1</b></p>
<p><b>H2</b><b>H3</b><b>H4</b><b>H5</b><b>H6</b><b>H7</b><b>H8</b><b>H1</b><b>H2</b><b>H3</b><b>H4</b><b>H5</b><b>H6</b><b>H7</b><b>H8</b><b>H1</b><b>H2</b><b>H3</b><b>H4</b><b>H5</b><b>H6</b><b>H7</b><b>H8</b><b>H1</b></p>
<p><b>A2</b><b>A3</b><b>A4</b><b>A5</b><b>A6</b><b>A7</b><b>A8</b><b>A1</b><b>A2</b><b>A3</b><b>A4</b><b>A5</b><b>A6</b><b>A7</b><b>A8</b><b>A1</b><b>A2</b><b>A3</b><b>A4</b><b>A5</b><b>A6</b><b>A7</b><b>A8</b><b>A1</b></p>
<p><b>B2</b><b>B3</b><b>B4</b><b>B5</b><b>B6</b><b>B7</b><b>B8</b><b>B1</b><b>B2</b><b>B3</b><b>B4</b><b>B5</b><b>B6</b><b>B7</b><b>B8</b><b>B1</b><b>B2</b><b>B3</b><b>B4</b><b>B5</b><b>B6</b><b>B7</b><b>B8</b><b>B1</b></p>
<p><b>C2</b><b>C3</b><b>C4</b><b>C5</b><b>C6</b><b>C7</b><b>C8</b><b>C1</b><b>C2</b><b>C3</b><b>C4</b><b>C5</b><b>C6</b><b>C7</b><b>C8</b><b>C1</b><b>C2</b><b>C3</b><b>C4</b><b>C5</b><b>C6</b><b>C7</b><b>C8</b><b>C1</b></p>
</div>
<div class="lb" style="left:0;top:0;width:512px;height:992px;transform-origin:0 0;transform:matrix3d(1.04433686,-0.0182393529,0,0.00292050682,1.40954994,0.00250198023,0,-0.00040062004,0,0,1,0,-558.993626,592.336006,0,1)">
<p><b>A2</b><b>A3</b><b>A4</b><b>A5</b><b>A6</b><b>A7</b><b>A8</b><b>A1</b><b>A2</b><b>A3</b><b>A4</b><b>A5</b><b>A6</b><b>A7</b><b>A8</b><b>A1</b></p>
<p><b>B2</b><b>B3</b><b>B4</b><b>B5</b><b>B6</b><b>B7</b><b>B8</b><b>B1</b><b>B2</b><b>B3</b><b>B4</b><b>B5</b><b>B6</b><b>B7</b><b>B8</b><b>B1</b></p>
<p><b>C2</b><b>C3</b><b>C4</b><b>C5</b><b>C6</b><b>C7</b><b>C8</b><b>C1</b><b>C2</b><b>C3</b><b>C4</b><b>C5</b><b>C6</b><b>C7</b><b>C8</b><b>C1</b></p>
<p><b>D2</b><b>D3</b><b>D4</b><b>D5</b><b>D6</b><b>D7</b><b>D8</b><b>D1</b><b>D2</b><b>D3</b><b>D4</b><b>D5</b><b>D6</b><b>D7</b><b>D8</b><b>D1</b></p>
<p><b>E2</b><b>E3</b><b>E4</b><b>E5</b><b>E6</b><b>E7</b><b>E8</b><b>E1</b><b>E2</b><b>E3</b><b>E4</b><b>E5</b><b>E6</b><b>E7</b><b>E8</b><b>E1</b></p>
<p><b>F2</b><b>F3</b><b>F4</b><b>F5</b><b>F6</b><b>F7</b><b>F8</b><b>F1</b><b>F2</b><b>F3</b><b>F4</b><b>F5</b><b>F6</b><b>F7</b><b>F8</b><b>F1</b></p>
<p><b>G2</b><b>G3</b><b>G4</b><b>G5</b><b>G6</b><b>G7</b><b>G8</b><b>G1</b><b>G2</b><b>G3</b><b>G4</b><b>G5</b><b>G6</b><b>G7</b><b>G8</b><b>G1</b></p>
<p><b>H2</b><b>H3</b><b>H4</b><b>H5</b><b>H6</b><b>H7</b><b>H8</b><b>H1</b><b>H2</b><b>H3</b><b>H4</b><b>H5</b><b>H6</b><b>H7</b><b>H8</b><b>H1</b></p>
<p><b>A2</b><b>A3</b><b>A4</b><b>A5</b><b>A6</b><b>A7</b><b>A8</b><b>A1</b><b>A2</b><b>A3</b><b>A4</b><b>A5</b><b>A6</b><b>A7</b><b>A8</b><b>A1</b></p>
<p><b>B2</b><b>B3</b><b>B4</b><b>B5</b><b>B6</b><b>B7</b><b>B8</b><b>B1</b><b>B2</b><b>B3</b><b>B4</b><b>B5</b><b>B6</b><b>B7</b><b>B8</b><b>B1</b></p>
<p><b>C2</b><b>C3</b><b>C4</b><b>C5</b><b>C6</b><b>C7</b><b>C8</b><b>C1</b><b>C2</b><b>C3</b><b>C4</b><b>C5</b><b>C6</b><b>C7</b><b>C8</b><b>C1</b></p>
<p><b>D2</b><b>D3</b><b>D4</b><b>D5</b><b>D6</b><b>D7</b><b>D8</b><b>D1</b><b>D2</b><b>D3</b><b>D4</b><b>D5</b><b>D6</b><b>D7</b><b>D8</b><b>D1</b></p>
<p><b>E2</b><b>E3</b><b>E4</b><b>E5</b><b>E6</b><b>E7</b><b>E8</b><b>E1</b><b>E2</b><b>E3</b><b>E4</b><b>E5</b><b>E6</b><b>E7</b><b>E8</b><b>E1</b></p>
<p><b>F2</b><b>F3</b><b>F4</b><b>F5</b><b>F6</b><b>F7</b><b>F8</b><b>F1</b><b>F2</b><b>F3</b><b>F4</b><b>F5</b><b>F6</b><b>F7</b><b>F8</b><b>F1</b></p>
<p><b>G2</b><b>G3</b><b>G4</b><b>G5</b><b>G6</b><b>G7</b><b>G8</b><b>G1</b><b>G2</b><b>G3</b><b>G4</b><b>G5</b><b>G6</b><b>G7</b><b>G8</b><b>G1</b></p>
<p><b>H2</b><b>H3</b><b>H4</b><b>H5</b><b>H6</b><b>H7</b><b>H8</b><b>H1</b><b>H2</b><b>H3</b><b>H4</b><b>H5</b><b>H6</b><b>H7</b><b>H8</b><b>H1</b></p>
<p><b>A2</b><b>A3</b><b>A4</b><b>A5</b><b>A6</b><b>A7</b><b>A8</b><b>A1</b><b>A2</b><b>A3</b><b>A4</b><b>A5</b><b>A6</b><b>A7</b><b>A8</b><b>A1</b></p>
<p><b>B2</b><b>B3</b><b>B4</b><b>B5</b><b>B6</b><b>B7</b><b>B8</b><b>B1</b><b>B2</b><b>B3</b><b>B4</b><b>B5</b><b>B6</b><b>B7</b><b>B8</b><b>B1</b></p>
<p><b>C2</b><b>C3</b><b>C4</b><b>C5</b><b>C6</b><b>C7</b><b>C8</b><b>C1</b><b>C2</b><b>C3</b><b>C4</b><b>C5</b><b>C6</b><b>C7</b><b>C8</b><b>C1</b></p>
<p><b>D2</b><b>D3</b><b>D4</b><b>D5</b><b>D6</b><b>D7</b><b>D8</b><b>D1</b><b>D2</b><b>D3</b><b>D4</b><b>D5</b><b>D6</b><b>D7</b><b>D8</b><b>D1</b></p>
<p><b>E2</b><b>E3</b><b>E4</b><b>E5</b><b>E6</b><b>E7</b><b>E8</b><b>E1</b><b>E2</b><b>E3</b><b>E4</b><b>E5</b><b>E6</b><b>E7</b><b>E8</b><b>E1</b></p>
<p><b>F2</b><b>F3</b><b>F4</b><b>F5</b><b>F6</b><b>F7</b><b>F8</b><b>F1</b><b>F2</b><b>F3</b><b>F4</b><b>F5</b><b>F6</b><b>F7</b><b>F8</b><b>F1</b></p>
<p><b>G2</b><b>G3</b><b>G4</b><b>G5</b><b>G6</b><b>G7</b><b>G8</b><b>G1</b><b>G2</b><b>G3</b><b>G4</b><b>G5</b><b>G6</b><b>G7</b><b>G8</b><b>G1</b></p>
<p><b>H2</b><b>H3</b><b>H4</b><b>H5</b><b>H6</b><b>H7</b><b>H8</b><b>H1</b><b>H2</b><b>H3</b><b>H4</b><b>H5</b><b>H6</b><b>H7</b><b>H8</b><b>H1</b></p>
<p><b>A2</b><b>A3</b><b>A4</b><b>A5</b><b>A6</b><b>A7</b><b>A8</b><b>A1</b><b>A2</b><b>A3</b><b>A4</b><b>A5</b><b>A6</b><b>A7</b><b>A8</b><b>A1</b></p>
<p><b>B2</b><b>B3</b><b>B4</b><b>B5</b><b>B6</b><b>B7</b><b>B8</b><b>B1</b><b>B2</b><b>B3</b><b>B4</b><b>B5</b><b>B6</b><b>B7</b><b>B8</b><b>B1</b></p>
<p><b>C2</b><b>C3</b><b>C4</b><b>C5</b><b>C6</b><b>C7</b><b>C8</b><b>C1</b><b>C2</b><b>C3</b><b>C4</b><b>C5</b><b>C6</b><b>C7</b><b>C8</b><b>C1</b></p>
<p><b>D2</b><b>D3</b><b>D4</b><b>D5</b><b>D6</b><b>D7</b><b>D8</b><b>D1</b><b>D2</b><b>D3</b><b>D4</b><b>D5</b><b>D6</b><b>D7</b><b>D8</b><b>D1</b></p>
<p><b>E2</b><b>E3</b><b>E4</b><b>E5</b><b>E6</b><b>E7</b><b>E8</b><b>E1</b><b>E2</b><b>E3</b><b>E4</b><b>E5</b><b>E6</b><b>E7</b><b>E8</b><b>E1</b></p>
<p><b>F2</b><b>F3</b><b>F4</b><b>F5</b><b>F6</b><b>F7</b><b>F8</b><b>F1</b><b>F2</b><b>F3</b><b>F4</b><b>F5</b><b>F6</b><b>F7</b><b>F8</b><b>F1</b></p>
<p><b>G2</b><b>G3</b><b>G4</b><b>G5</b><b>G6</b><b>G7</b><b>G8</b><b>G1</b><b>G2</b><b>G3</b><b>G4</b><b>G5</b><b>G6</b><b>G7</b><b>G8</b><b>G1</b></p>
</div>
</div>
</div>
<div style="left:246px;top:105px;width:572px;height:594px;overflow:hidden;">
<div style="left:0;top:0;width:572px;height:594px;background:radial-gradient(ellipse 420px 360px at 100% 100%,rgba(255,255,255,.32),rgba(255,255,255,0) 100%)"></div>
<div style="left:0;top:0;width:572px;height:594px;background:linear-gradient(90deg,rgba(0,0,0,.0),rgba(0,0,0,0) 40%)"></div>
<svg style="left:0;top:0" width="572" height="594" viewBox="0 0 572 594"><defs><filter id="bl1" x="-20%" y="-20%" width="140%" height="140%"><feGaussianBlur stdDeviation="1.2"/></filter><filter id="bl3" x="-50%" y="-50%" width="200%" height="200%"><feGaussianBlur stdDeviation="3"/></filter><filter id="bl2" x="-50%" y="-50%" width="200%" height="200%"><feGaussianBlur stdDeviation="4.5"/></filter></defs><polygon points="-6.0,357.0 57.0,336.0 85.0,405.0 126.0,395.0 156.0,384.0 152.0,392.0 102.0,408.0 -6.0,448.0" fill="#000" opacity=".17" filter="url(#bl1)"/><ellipse cx="488" cy="292" rx="13" ry="5" fill="#000" opacity=".16" filter="url(#bl3)" transform="rotate(-12 488 292)"/><circle cx="191.39999999999998" cy="361" r="10" fill="#fff" opacity=".75" filter="url(#bl1)"/><ellipse cx="162" cy="216" rx="9" ry="4.5" fill="#fff" opacity=".35" filter="url(#bl1)"/></svg>
<svg style="left:0;top:0" width="572" height="594" viewBox="0 0 572 594"><polygon points="121.5,255.5 123.8,256.0 126.5,261.0 130.2,269.5 128.5,270.3 124.8,264.5" fill="#3a3030"/><circle cx="126.30000000000001" cy="264.5" r="1.1" fill="#e02020"/><polygon points="131.5,291.0 135.0,293.0 139.3,308.5 136.3,309.3 133.3,300.0" fill="#2c2c2c"/></svg>
<div class="bx" style="left:0;top:0;width:128px;height:128px;transform-origin:0 0;transform:matrix3d(0.503998905,-0.021042861,0,0.000260050295,-0.0994290764,-0.149081251,0,-0.00232209746,0,0,1,0,41.4,226.4,0,1);background:conic-gradient(#c0c0c0 25%,#f0f0f0 0 50%,#c0c0c0 0 75%,#f0f0f0 0) 0 0/32px 32px;color:#d8d8d8;">
<p><b>H1</b><b>H2</b><b>H3</b><b>H4</b><b>H5</b><b>H6</b><b>H7</b><b>H8</b></p>
<p><b>G1</b><b>G2</b><b>G3</b><b>G4</b><b>G5</b><b>G6</b><b>G7</b><b>G8</b></p>
<p><b>F1</b><b>F2</b><b>F3</b><b>F4</b><b>F5</b><b>F6</b><b>F7</b><b>F8</b></p>
<p><b>E1</b><b>E2</b><b>E3</b><b>E4</b><b>E5</b><b>E6</b><b>E7</b><b>E8</b></p>
<p><b>D1</b><b>D2</b><b>D3</b><b>D4</b><b>D5</b><b>D6</b><b>D7</b><b>D8</b></p>
<p><b>C1</b><b>C2</b><b>C3</b><b>C4</b><b>C5</b><b>C6</b><b>C7</b><b>C8</b></p>
<p><b>B1</b><b>B2</b><b>B3</b><b>B4</b><b>B5</b><b>B6</b><b>B7</b><b>B8</b></p>
<p><b>A1</b><b>A2</b><b>A3</b><b>A4</b><b>A5</b><b>A6</b><b>A7</b><b>A8</b></p>
</div>
<div style="left:0;top:0;width:572px;height:594px;"></div>
<div class="bx" style="left:0;top:0;width:128px;height:128px;transform-origin:0 0;transform:matrix3d(0.768736655,0.0728201773,0,0.00075038705,0.491447482,1.51876089,0,0.00163036109,0,0,1,0,40.8,295.6,0,1);background:conic-gradient(#747474 25%,#a2a2a2 0 50%,#747474 0 75%,#a2a2a2 0) 0 0/32px 32px;color:#8b8b8b;">
<p><b>A1</b><b>A2</b><b>A3</b><b>A4</b><b>A5</b><b>A6</b><b>A7</b><b>A8</b></p>
<p><b>B1</b><b>B2</b><b>B3</b><b>B4</b><b>B5</b><b>B6</b><b>B7</b><b>B8</b></p>
<p><b>C1</b><b>C2</b><b>C3</b><b>C4</b><b>C5</b><b>C6</b><b>C7</b><b>C8</b></p>
<p><b>D1</b><b>D2</b><b>D3</b><b>D4</b><b>D5</b><b>D6</b><b>D7</b><b>D8</b></p>
<p><b>E1</b><b>E2</b><b>E3</b><b>E4</b><b>E5</b><b>E6</b><b>E7</b><b>E8</b></p>
<p><b>F1</b><b>F2</b><b>F3</b><b>F4</b><b>F5</b><b>F6</b><b>F7</b><b>F8</b></p>
<p><b>G1</b><b>G2</b><b>G3</b><b>G4</b><b>G5</b><b>G6</b><b>G7</b><b>G8</b></p>
<p><b>H1</b><b>H2</b><b>H3</b><b>H4</b><b>H5</b><b>H6</b><b>H7</b><b>H8</b></p>
</div>
<svg style="left:0;top:0" width="572" height="594" viewBox="0 0 572 594"><defs><linearGradient id="fsh" x1="0" y1="0" x2="0.25" y2="1"><stop offset="0" stop-color="#000" stop-opacity="0"/><stop offset=".55" stop-color="#000" stop-opacity=".06"/><stop offset="1" stop-color="#000" stop-opacity=".22"/></linearGradient></defs><polygon points="40.8,295.6 127.0,278.2 154.9,382.7 85.8,405.4" fill="url(#fsh)"/><g transform="rotate(-4 154.8 223.8)"><ellipse cx="154.8" cy="223.8" rx="19" ry="8.6" fill="#4a24d8"/><ellipse cx="153.8" cy="222.3" rx="10.5" ry="6" fill="#a98cf2"/></g><line x1="153.3" y1="218.4" x2="503.8" y2="282.2" stroke="#3cf23c" stroke-width="1.7" opacity="1"/><line x1="153.3" y1="218.4" x2="187.0" y2="342.0" stroke="#3cf23c" stroke-width="1.7" opacity="1"/><polygon points="153.3,218.4 193.3,215.0 195.8,221.4 191.4,235.0 185.0,232.6" fill="#8cf58c" opacity=".38"/><line x1="153.3" y1="218.4" x2="193.3" y2="215.0" stroke="#3cf23c" stroke-width="1.2" opacity="0.9"/><line x1="153.3" y1="218.4" x2="184.5" y2="217.6" stroke="#3cf23c" stroke-width="1.2" opacity="0.9"/><line x1="153.3" y1="218.4" x2="182.5" y2="225.0" stroke="#3cf23c" stroke-width="1.2" opacity="0.9"/><line x1="153.3" y1="218.4" x2="185.0" y2="232.6" stroke="#3cf23c" stroke-width="1.2" opacity="0.9"/><line x1="153.3" y1="218.4" x2="191.4" y2="235.0" stroke="#3cf23c" stroke-width="1.2" opacity="0.9"/><line x1="153.3" y1="218.4" x2="194.6" y2="228.7" stroke="#3cf23c" stroke-width="1.2" opacity="0.9"/><line x1="153.3" y1="218.4" x2="195.8" y2="221.4" stroke="#3cf23c" stroke-width="1.2" opacity="0.9"/><polygon points="193.3,215.0 184.5,217.6 182.5,225.0 185.0,232.6 191.4,235.0 194.6,228.7 195.8,221.4" fill="none" stroke="#3cf23c" stroke-width="1.3"/><polygon points="192.0,359.5 173.8,335.2 185.0,338.0 195.3,330.3" fill="#8cf58c" opacity=".6"/><line x1="192.0" y1="359.5" x2="182.6" y2="324.8" stroke="#3cf23c" stroke-width="1.2" opacity="0.9"/><line x1="192.0" y1="359.5" x2="191.4" y2="325.3" stroke="#3cf23c" stroke-width="1.2" opacity="0.9"/><line x1="192.0" y1="359.5" x2="195.3" y2="330.3" stroke="#3cf23c" stroke-width="1.2" opacity="0.9"/><line x1="192.0" y1="359.5" x2="193.0" y2="336.0" stroke="#3cf23c" stroke-width="1.2" opacity="0.9"/><line x1="192.0" y1="359.5" x2="185.0" y2="338.0" stroke="#3cf23c" stroke-width="1.2" opacity="0.9"/><line x1="192.0" y1="359.5" x2="173.8" y2="335.2" stroke="#3cf23c" stroke-width="1.2" opacity="0.9"/><line x1="192.0" y1="359.5" x2="176.0" y2="328.6" stroke="#3cf23c" stroke-width="1.2" opacity="0.9"/><polygon points="182.6,324.8 191.4,325.3 195.3,330.3 193.0,336.0 185.0,338.0 173.8,335.2 176.0,328.6" fill="none" stroke="#3cf23c" stroke-width="1.3"/><polygon points="506.0,257.0 512.0,261.0 509.0,275.0 506.0,280.0 502.0,279.0 504.0,269.0" fill="#4a3428"/><polygon points="511.0,263.0 516.0,266.0 511.0,279.0 507.0,287.0 503.0,285.0 508.0,275.0" fill="#3c2a20"/><polygon points="491.0,275.5 496.0,273.0 504.0,275.0 505.0,280.0 499.0,281.0 492.0,278.0" fill="#8e8e8e"/><polygon points="496.0,288.0 500.0,284.0 507.0,283.0 508.0,287.0 502.0,290.0 497.0,290.5" fill="#969696"/><polygon points="509.0,242.0 523.0,248.0 520.0,257.0 514.0,267.0 505.0,263.0 504.0,257.0" fill="#5d83a3"/><polygon points="516.0,247.0 523.0,248.0 520.0,257.0 514.0,267.0 511.0,265.0" fill="#4b6d8b"/><polygon points="518.0,219.0 521.0,222.0 511.0,241.0 507.0,247.0 505.0,245.0 510.0,233.0" fill="#5a4030"/><polygon points="520.0,216.0 528.0,215.0 536.0,220.0 535.0,229.0 528.0,236.0 523.0,248.0 509.0,243.0 512.0,232.0 517.0,223.0" fill="#c2121c"/><polygon points="528.0,223.0 535.0,222.0 535.0,229.0 528.0,236.0 523.0,248.0 519.0,246.0 525.0,233.0" fill="#a30d16"/><polygon points="517.0,223.0 520.0,223.0 517.0,236.0 514.0,238.0" fill="#e0a020"/><polygon points="526.0,232.0 531.0,233.0 526.0,246.0 523.0,256.0 519.0,257.0 518.0,252.0 522.0,244.0" fill="#6a4a38"/><polygon points="522.0,208.0 526.0,206.0 529.0,213.0 527.0,217.0 522.0,216.0 521.0,212.0" fill="#8a6048"/><ellipse cx="529.5" cy="207" rx="6.3" ry="6" fill="#2a2019"/><circle cx="464" cy="18" r="11" fill="#f0f0f0"/><rect x="457.5" y="12.5" width="13" height="9" rx="1" fill="none" stroke="#8c8c8c" stroke-width="1.6"/><path d="M462.5 21.5 h3 v2 h2 v1.3 h-7 v-1.3 h2 z" fill="#8c8c8c"/><circle cx="494" cy="18" r="11" fill="#f0f0f0"/><circle cx="494" cy="18" r="3.2" fill="#8c8c8c"/><line x1="499.0" y1="18.0" x2="502.3" y2="18.0" stroke="#8c8c8c" stroke-width="1.2"/><line x1="497.5" y1="21.5" x2="499.9" y2="23.9" stroke="#8c8c8c" stroke-width="1.2"/><line x1="494.0" y1="23.0" x2="494.0" y2="26.3" stroke="#8c8c8c" stroke-width="1.2"/><line x1="490.5" y1="21.5" x2="488.1" y2="23.9" stroke="#8c8c8c" stroke-width="1.2"/><line x1="489.0" y1="18.0" x2="485.7" y2="18.0" stroke="#8c8c8c" stroke-width="1.2"/><line x1="490.5" y1="14.5" x2="488.1" y2="12.1" stroke="#8c8c8c" stroke-width="1.2"/><line x1="494.0" y1="13.0" x2="494.0" y2="9.7" stroke="#8c8c8c" stroke-width="1.2"/><line x1="497.5" y1="14.5" x2="499.9" y2="12.1" stroke="#8c8c8c" stroke-width="1.2"/><circle cx="524" cy="18" r="11" fill="#f0f0f0"/><circle cx="524" cy="18" r="3.2" fill="#8c8c8c"/><line x1="529.0" y1="18.0" x2="532.3" y2="18.0" stroke="#8c8c8c" stroke-width="1.2"/><line x1="527.5" y1="21.5" x2="529.9" y2="23.9" stroke="#8c8c8c" stroke-width="1.2"/><line x1="524.0" y1="23.0" x2="524.0" y2="26.3" stroke="#8c8c8c" stroke-width="1.2"/><line x1="520.5" y1="21.5" x2="518.1" y2="23.9" stroke="#8c8c8c" stroke-width="1.2"/><line x1="519.0" y1="18.0" x2="515.7" y2="18.0" stroke="#8c8c8c" stroke-width="1.2"/><line x1="520.5" y1="14.5" x2="518.1" y2="12.1" stroke="#8c8c8c" stroke-width="1.2"/><line x1="524.0" y1="13.0" x2="524.0" y2="9.7" stroke="#8c8c8c" stroke-width="1.2"/><line x1="527.5" y1="14.5" x2="529.9" y2="12.1" stroke="#8c8c8c" stroke-width="1.2"/><circle cx="554" cy="18" r="11" fill="#f0f0f0"/><rect x="547" y="13" width="10" height="10" rx="1.5" fill="#8c8c8c"/><path d="M557 17 l4.5 -3.5 v9 l-4.5 -3.5 z" fill="#8c8c8c"/></svg>
<span class="t" style="left:6px;top:574px;font-size:14.5px;color:#0530f5;letter-spacing:0.3px">www.historian.by</span>
</div>
<div style="left:825px;top:59px;width:195px;height:210px;border:1px solid #4c4c4c;box-sizing:border-box;"></div>
<div style="left:826px;top:60px;width:193px;height:19px;background:#0a0a0a;"></div>
<span class="t" style="left:831px;top:62px;font-size:12px;color:#9a9a9a;">Объекты</span>
<svg style="left:971px;top:66px;" width="10" height="8" viewBox="0 0 10 8"><path d="M1 2 H9 L5 6.5 Z" fill="#b8b8b8"/></svg>
<svg style="left:988px;top:63px;" width="8" height="13" viewBox="0 0 8 13"><path d="M2.5 1.5 H5.5 V7.5 H2.5 Z M1 7.5 H7 M4 7.5 V12.5" stroke="#c4c4c4" stroke-width="1" fill="none"/></svg>
<svg style="left:1002px;top:64px;" width="12" height="12" viewBox="0 0 12 12"><path d="M1.5 1.5 L10 10 M10 1.5 L1.5 10" stroke="#ececec" stroke-width="2" fill="none"/></svg>
<div style="left:826px;top:79px;width:193px;height:25px;background:#333333;"></div>
<div style="left:826px;top:103px;width:193px;height:1px;background:#4c4c4c;"></div>
<svg style="left:828px;top:83px;" width="16" height="16" viewBox="0 0 16 16"><path d="M2.2 2.2 L9.5 9.5" stroke="#f4f4f4" stroke-width="1.3" stroke-linecap="round"/><path d="M9.2 9.2 L13.6 13.6" stroke="#3b8ee0" stroke-width="2.4" stroke-linecap="round"/><path d="M3 13.2 L10 6.2" stroke="#f4f4f4" stroke-width="2" stroke-linecap="round"/><path d="M9.2 4.2 A3 3 0 0 1 13.4 2 L11.4 4 L12.2 5 L14.2 3 A3 3 0 0 1 11.8 7 Z" fill="#f4f4f4"/><circle cx="3" cy="13.2" r="1.5" fill="#f4f4f4"/></svg>
<svg style="left:848px;top:83px;" width="16" height="16" viewBox="0 0 16 16"><path d="M1 5 L6 1.5 L9.5 5.5 L4.5 9 Z" fill="#e6c21a"/><path d="M7 7 H11 V11" stroke="#aaa" stroke-width=".8" fill="none"/><path d="M9.5 5.5 L12.5 4 L14.5 6.5 L11.5 8.5 Z" fill="#38a8e8"/><path d="M10 11.5 L13 10 L15 12.5 L12 14.5 Z" fill="#e85ab0"/></svg>
<div style="left:869px;top:82px;width:1px;height:19px;background:#222;"></div>
<div style="left:915px;top:82px;width:1px;height:19px;background:#222;"></div>
<svg style="left:874px;top:83px;" width="16" height="16" viewBox="0 0 16 16"><path d="M2 1 H10 L14 5 V15 H2 Z" fill="#fafafa" stroke="#bdbdbd" stroke-width=".6"/><path d="M10 1 V5 H14 Z" fill="#d8d8d8"/><path d="M7.2 12.6 L13.6 6.2 L15.4 8 L9 14.4 L6.6 15 Z" fill="#f3b233" stroke="#b07a18" stroke-width=".5"/><path d="M13.6 6.2 L15.4 8 L16 7.2 L14.4 5.5 Z" fill="#e58ac0"/><path d="M7.2 12.6 L9 14.4 L6.6 15 Z" fill="#444"/></svg>
<svg style="left:895px;top:83px;" width="16" height="16" viewBox="0 0 16 16"><rect x="3.5" y="2.5" width="12" height="9" rx="1" fill="#7aa7dd" stroke="#4d7fc0" stroke-width=".8"/><rect x="0.5" y="5" width="12.5" height="9.5" rx="1" fill="#f4f7fb" stroke="#4d7fc0" stroke-width=".9"/><rect x="0.5" y="5" width="12.5" height="2.5" fill="#5b8fd6"/></svg>
<svg style="left:921px;top:83px;" width="16" height="16" viewBox="0 0 16 16"><path d="M2 1 H9 L13 5 V15 H2 Z" fill="#fafafa" stroke="#bdbdbd" stroke-width=".6"/><path d="M9 1 V5 H13 Z" fill="#d8d8d8"/><polygon points="11.30,6.30 12.60,9.42 15.96,9.69 13.40,11.88 14.18,15.16 11.30,13.40 8.42,15.16 9.20,11.88 6.64,9.69 10.00,9.42" fill="#f6b93a"/></svg>
<svg style="left:942px;top:84px;" width="15" height="15" viewBox="0 0 16 16"><path d="M3 3.5 L13 13 M13 3.5 L3 13" stroke="#6c6c6c" stroke-width="3.3" fill="none"/></svg>
<svg style="left:962px;top:84px;" width="16" height="16" viewBox="0 0 16 16"><rect x="0.8" y="2.8" width="14.4" height="10.6" fill="#1e1e1e" stroke="#f4f4f4" stroke-width="1.6"/><path d="M3.3 5.2 H6 M3.3 11 H6 M4.65 5.2 V11" stroke="#f4f4f4" stroke-width=".9" fill="none"/></svg>
<svg style="left:981px;top:83px;" width="16" height="16" viewBox="0 0 16 16"><path d="M1 0.5 H7 L10 3.5 V12 H1 Z" fill="#7c7c7c"/><path d="M2.5 4 H6 M2.5 6 H4 M2.5 8 H4 M2.5 10 H4" stroke="#a8a8a8" stroke-width=".7"/><path d="M5 3.5 H11 L14.5 7 V15.5 H5 Z" fill="#909090" stroke="#5c5c5c" stroke-width=".5"/><path d="M11 3.5 V7 H14.5 Z" fill="#b0b0b0"/><path d="M6.5 9 H13 M6.5 11 H13 M6.5 13 H13" stroke="#bcbcbc" stroke-width=".8"/></svg>
<div style="left:826px;top:104px;width:176px;height:148px;background:#262626;"></div>
<div style="left:826px;top:104px;width:176px;height:18px;background:#3c3c3c;"></div>
<div style="left:833px;top:108px;width:7px;height:7px;background:#3e3e3e;"></div>
<div style="left:834px;top:111px;width:5px;height:1px;background:#b0b0b0;"></div>
<div style="left:833px;top:108px;width:7px;height:7px;background:#2c2c2c;"></div>
<div style="left:834px;top:111px;width:5px;height:1px;background:#b0b0b0;"></div>
<svg style="left:847px;top:105px;" width="14" height="16" viewBox="0 0 14 16"><rect x="0" y="0" width="14" height="16" fill="#7fd0f0"/><path d="M0 8 H14 M5 0 V16 M10 0 V16" stroke="#e8f8ff" stroke-width=".7"/><rect x="0" y="9" width="3" height="5" fill="#f0d060"/><path d="M6.5 13 V7 M5 9 L6.5 6.5 L8 9 Z" stroke="#111" fill="#111" stroke-width="1"/><rect x="10" y="3" width="3" height="2.5" fill="#e02020"/></svg>
<span class="t" style="left:867px;top:105px;font-size:11px;color:#f0f0f0;letter-spacing:-0.12px;">'Корень' - Scene</span>
<svg style="left:865px;top:123px;" width="16" height="16" viewBox="0 0 16 16"><path d="M1 5 H11 V13 H1 Z" fill="#5a5a5a" stroke="#bbb" stroke-width=".8"/><rect x="2.5" y="7.5" width="6" height="4" fill="#45a8f0"/><path d="M11 8 L15.5 5.5 V13.5 L11 11 Z" fill="#777" stroke="#bbb" stroke-width=".7"/><path d="M0 4 H8 V6 H0 Z" fill="#c8c8c8"/></svg>
<span class="t" style="left:886px;top:123px;font-size:11px;color:#f0f0f0;letter-spacing:-0.17px;width:115px;overflow:hidden;white-space:nowrap;">Camera Editor - Camera</span>
<svg style="left:865px;top:141px;" width="16" height="16" viewBox="0 0 16 16"><path d="M1 5 H11 V13 H1 Z" fill="#5a5a5a" stroke="#bbb" stroke-width=".8"/><rect x="2.5" y="7.5" width="6" height="4" fill="#45a8f0"/><path d="M11 8 L15.5 5.5 V13.5 L11 11 Z" fill="#777" stroke="#bbb" stroke-width=".7"/><path d="M0 4 H8 V6 H0 Z" fill="#c8c8c8"/></svg>
<span class="t" style="left:886px;top:141px;font-size:11px;color:#f0f0f0;letter-spacing:-0.17px;width:115px;overflow:hidden;white-space:nowrap;">Camera Editor 2D - Cam</span>
<svg style="left:865px;top:159px;" width="16" height="16" viewBox="0 0 16 16"><circle cx="8" cy="6.5" r="5.8" fill="#fbd98a" stroke="#e8b050" stroke-width=".8"/><circle cx="7" cy="5" r="3" fill="#fff2c8"/><path d="M5.5 8 L6.5 5.5 L8 8 L9.5 5.5 L10.5 8" stroke="#c89030" stroke-width=".7" fill="none"/><rect x="5.5" y="11.5" width="5" height="4" rx="1" fill="#9a9a9a"/></svg>
<span class="t" style="left:886px;top:159px;font-size:11px;color:#f0f0f0;letter-spacing:-0.17px;width:115px;overflow:hidden;white-space:nowrap;">Ambient Light - Light</span>
<svg style="left:865px;top:177px;" width="16" height="16" viewBox="0 0 16 16"><circle cx="8" cy="6.5" r="5.8" fill="#fbd98a" stroke="#e8b050" stroke-width=".8"/><circle cx="7" cy="5" r="3" fill="#fff2c8"/><path d="M5.5 8 L6.5 5.5 L8 8 L9.5 5.5 L10.5 8" stroke="#c89030" stroke-width=".7" fill="none"/><rect x="5.5" y="11.5" width="5" height="4" rx="1" fill="#9a9a9a"/></svg>
<span class="t" style="left:886px;top:177px;font-size:11px;color:#f0f0f0;letter-spacing:-0.17px;width:115px;overflow:hidden;white-space:nowrap;">Directional Light - Light</span>
<div style="left:852px;top:199px;width:7px;height:7px;background:#3e3e3e;"></div>
<div style="left:853px;top:202px;width:5px;height:1px;background:#b0b0b0;"></div>
<div style="left:855px;top:200px;width:1px;height:5px;background:#b0b0b0;"></div>
<svg style="left:865px;top:195px;" width="16" height="16" viewBox="0 0 16 16"><defs><linearGradient id="rpg" x1="0" x2="1"><stop offset="0" stop-color="#f33"/><stop offset=".25" stop-color="#ee3"/><stop offset=".5" stop-color="#3d3"/><stop offset=".75" stop-color="#3cf"/><stop offset="1" stop-color="#c3f"/></linearGradient><linearGradient id="rpw" x1="0" x2="0" y1="0" y2="1"><stop offset="0" stop-color="#fff" stop-opacity=".9"/><stop offset=".6" stop-color="#fff" stop-opacity="0"/></linearGradient></defs><rect x="0.5" y="1" width="15" height="14" fill="#f4f4f4" stroke="#6aa0e0" stroke-width="1"/><rect x="2" y="4" width="12" height="9.5" fill="url(#rpg)"/><rect x="2" y="4" width="12" height="9.5" fill="url(#rpw)"/></svg>
<span class="t" style="left:886px;top:195px;font-size:11px;color:#f0f0f0;letter-spacing:-0.17px;width:115px;overflow:hidden;white-space:nowrap;">Rendering Pipeline - Rer</span>
<svg style="left:865px;top:213px;" width="16" height="16" viewBox="0 0 16 16"><path d="M3 5 H13 C15 5 16 9 16 12 C16 14.5 14 14.5 12.5 12.5 L11.5 11.5 H4.5 L3.5 12.5 C2 14.5 0 14.5 0 12 C0 9 1 5 3 5 Z" fill="#e8e8e8" stroke="#999" stroke-width=".5"/><path d="M8 5 V2.5" stroke="#bbb" stroke-width="1"/><path d="M3 8.5 H6 M4.5 7 V10" stroke="#444" stroke-width="1.1"/><circle cx="11" cy="8.5" r="1" fill="#3a3"/><circle cx="13" cy="8.5" r="1" fill="#d33"/><circle cx="12" cy="7" r=".9" fill="#36d"/></svg>
<span class="t" style="left:886px;top:213px;font-size:11px;color:#f0f0f0;letter-spacing:-0.17px;width:115px;overflow:hidden;white-space:nowrap;">Game Mode - GameMode</span>
<div style="left:852px;top:235px;width:7px;height:7px;background:#3e3e3e;"></div>
<div style="left:853px;top:238px;width:5px;height:1px;background:#b0b0b0;"></div>
<div style="left:855px;top:236px;width:1px;height:5px;background:#b0b0b0;"></div>
<svg style="left:865px;top:231px;" width="16" height="16" viewBox="0 0 16 16"><path d="M8 2 L15 5 V11.5 L8 15 L1 11.5 V5 Z" fill="#7db8ee"/><path d="M8 2 L15 5 L8 8 L1 5 Z" fill="#b4d8f8"/><path d="M8 8 V15 L15 11.5 V5 Z" fill="#5a9fe0"/><ellipse cx="8" cy="4" rx="2.5" ry="1.2" fill="#d6ebfc"/></svg>
<span class="t" style="left:886px;top:231px;font-size:11px;color:#f0f0f0;letter-spacing:-0.17px;width:115px;overflow:hidden;white-space:nowrap;">Ground - MeshInSpace</span>
<div style="left:869px;top:250px;width:8px;height:2px;background:#e8a860;"></div>
<div style="left:1002px;top:104px;width:16px;height:148px;background:#2b2b2b;"></div>
<div style="left:1002px;top:104px;width:16px;height:16px;background:#303030;"></div>
<div style="left:1002px;top:236px;width:16px;height:16px;background:#303030;"></div>
<div style="left:1002px;top:120px;width:16px;height:43px;background:#3e3e3e;"></div>
<svg style="left:1006px;top:109px;" width="9" height="6" viewBox="0 0 9 6"><path d="M0.5 5 L4.5 1 L8.5 5" stroke="#c0c0c0" stroke-width="1" fill="none"/></svg>
<svg style="left:1006px;top:241px;" width="9" height="6" viewBox="0 0 9 6"><path d="M0.5 1 L4.5 5 L8.5 1" stroke="#c0c0c0" stroke-width="1" fill="none"/></svg>
<div style="left:826px;top:252px;width:176px;height:16px;background:#2b2b2b;"></div>
<div style="left:826px;top:252px;width:16px;height:16px;background:#303030;"></div>
<div style="left:986px;top:252px;width:16px;height:16px;background:#303030;"></div>
<div style="left:842px;top:252px;width:73px;height:16px;background:#3e3e3e;"></div>
<svg style="left:831px;top:256px;" width="6" height="9" viewBox="0 0 6 9"><path d="M5 0.5 L1 4.5 L5 8.5" stroke="#c0c0c0" stroke-width="1" fill="none"/></svg>
<svg style="left:991px;top:256px;" width="6" height="9" viewBox="0 0 6 9"><path d="M1 0.5 L5 4.5 L1 8.5" stroke="#c0c0c0" stroke-width="1" fill="none"/></svg>
<div style="left:1002px;top:252px;width:16px;height:16px;background:#333;"></div>
<div style="left:825px;top:274px;width:195px;height:427px;border:1px solid #4c4c4c;box-sizing:border-box;"></div>
<div style="left:826px;top:275px;width:193px;height:19px;background:#0a0a0a;"></div>
<span class="t" style="left:831px;top:277px;font-size:12px;color:#9a9a9a;">Настройки</span>
<svg style="left:971px;top:281px;" width="10" height="8" viewBox="0 0 10 8"><path d="M1 2 H9 L5 6.5 Z" fill="#b8b8b8"/></svg>
<svg style="left:988px;top:278px;" width="8" height="13" viewBox="0 0 8 13"><path d="M2.5 1.5 H5.5 V7.5 H2.5 Z M1 7.5 H7 M4 7.5 V12.5" stroke="#c4c4c4" stroke-width="1" fill="none"/></svg>
<svg style="left:1002px;top:279px;" width="12" height="12" viewBox="0 0 12 12"><path d="M1.5 1.5 L10 10 M10 1.5 L1.5 10" stroke="#ececec" stroke-width="2" fill="none"/></svg>
<span class="t" style="left:832px;top:300px;font-size:11.5px;color:#f0f0f0;font-weight:bold;">Scene</span>
<span class="t" style="left:832px;top:320px;font-size:11px;color:#f0f0f0;">Scene</span>
<svg style="left:997px;top:299px;" width="17" height="17" viewBox="0 0 17 17"><path d="M1 4 L5.5 1 L9 4.5 L4.5 8 Z" fill="#d8b818"/><path d="M7 7 H11 V11" stroke="#aaa" stroke-width=".8" fill="none"/><path d="M9 5.5 L12 4 L14 6.5 L11 8.5 Z" fill="#38a8e8"/><path d="M10 12 L13 10.5 L15 13 L12 15 Z" fill="#e85ab0"/></svg>
<div style="left:829px;top:341px;width:19px;height:21px;background:#505050;"></div>
<svg style="left:831px;top:344px;" width="15" height="15" viewBox="0 0 15 15"><rect x="0.5" y="1.5" width="14" height="12" fill="#f4f4f4" stroke="#5a8fd0" stroke-width="1"/><rect x="0.5" y="1.5" width="14" height="3" fill="#4a8be0"/><path d="M2.5 7 H4 M2.5 9 H4 M2.5 11 H4" stroke="#c33" stroke-width="1"/><path d="M5.5 7 H12 M5.5 9 H12 M5.5 11 H12" stroke="#888" stroke-width=".8"/><path d="M7 6 L10 3.5 L14 5 L12 8 Z" fill="#e8b070"/></svg>
<svg style="left:853px;top:342px;" width="12" height="18" viewBox="0 0 12 18"><path d="M8.5 3 L2 10 H6 L3.5 16.5 L11 8.5 H7 L11 3 Z" fill="#e2c21a"/><path d="M8.5 3 L2 10 H4 L9.5 3 Z" fill="#f6e04c"/></svg>
<div style="left:828px;top:364px;width:174px;height:18px;background:#2b2b2b;"></div>
<span class="t" style="left:832px;top:366px;font-size:11px;color:#b8b8b8;letter-spacing:-0.2px;">Компонент</span>
<div style="left:828px;top:477px;width:174px;height:17px;background:#2b2b2b;"></div>
<span class="t" style="left:832px;top:478px;font-size:11px;color:#b8b8b8;letter-spacing:-0.2px;">Сцена</span>
<div style="left:906px;top:382px;width:6px;height:95px;background:#414141;"></div>
<div style="left:906px;top:494px;width:6px;height:157px;background:#414141;"></div>
<div style="left:1002px;top:364px;width:16px;height:287px;background:#333;"></div>
<div style="left:1002px;top:364px;width:16px;height:16px;background:#383838;"></div>
<div style="left:1002px;top:635px;width:16px;height:16px;background:#383838;"></div>
<div style="left:1002px;top:380px;width:16px;height:44px;background:#424242;"></div>
<svg style="left:1006px;top:369px;" width="9" height="6" viewBox="0 0 9 6"><path d="M0.5 5 L4.5 1 L8.5 5" stroke="#c0c0c0" stroke-width="1" fill="none"/></svg>
<svg style="left:1006px;top:640px;" width="9" height="6" viewBox="0 0 9 6"><path d="M0.5 1 L4.5 5 L8.5 1" stroke="#c0c0c0" stroke-width="1" fill="none"/></svg>
<span class="t" style="left:847px;top:387px;font-size:11px;color:#f0f0f0;letter-spacing:-0.2px;">Включено</span>
<div style="left:952px;top:388px;width:13px;height:13px;background:#2b2b2b;border:1px solid #e8e8e8;box-sizing:border-box;"></div>
<svg style="left:953px;top:389px;" width="11" height="11" viewBox="0 0 11 11"><path d="M1.5 5.5 L4.5 8.5 L9.5 2" stroke="#fff" stroke-width="1.8" fill="none"/></svg>
<span class="t" style="left:847px;top:410px;font-size:11px;color:#f0f0f0;letter-spacing:-0.2px;">Name</span>
<div style="left:951px;top:409px;width:49px;height:18px;background:#2b2b2b;border:1px solid #5a5a5a;box-sizing:border-box;"></div>
<span class="t" style="left:847px;top:433px;font-size:11px;color:#f0f0f0;letter-spacing:-0.2px;">Screen L...</span>
<div style="left:926px;top:432px;width:23px;height:18px;background:#3e3e3e;border:1px solid #5a5a5a;box-sizing:border-box;"></div>
<div style="left:951px;top:432px;width:49px;height:18px;background:#3e3e3e;border:1px solid #5a5a5a;box-sizing:border-box;"></div>
<span class="t" style="left:956px;top:433px;font-size:11px;color:#f0f0f0;letter-spacing:-0.3px;">Auto</span>
<svg style="left:986px;top:438px;" width="9" height="6" viewBox="0 0 9 6"><path d="M0.5 0.5 H8.5 L4.5 5 Z" fill="#a8a8a8"/></svg>
<span class="t" style="left:847px;top:456px;font-size:11px;color:#f0f0f0;letter-spacing:-0.2px;">Network ...</span>
<div style="left:926px;top:455px;width:23px;height:18px;background:#3e3e3e;border:1px solid #5a5a5a;box-sizing:border-box;"></div>
<div style="left:951px;top:455px;width:49px;height:18px;background:#3e3e3e;border:1px solid #5a5a5a;box-sizing:border-box;"></div>
<span class="t" style="left:956px;top:456px;font-size:11px;color:#f0f0f0;letter-spacing:-0.3px;">True</span>
<svg style="left:986px;top:461px;" width="9" height="6" viewBox="0 0 9 6"><path d="M0.5 0.5 H8.5 L4.5 5 Z" fill="#a8a8a8"/></svg>
<span class="t" style="left:847px;top:499px;font-size:11px;color:#f0f0f0;letter-spacing:-0.2px;">Renderin...</span>
<div style="left:926px;top:498px;width:23px;height:18px;background:#3e3e3e;border:1px solid #5a5a5a;box-sizing:border-box;"></div>
<svg style="left:934px;top:503px;" width="6" height="9" viewBox="0 0 6 9"><path d="M0.5 0.5 L5.5 4.5 L0.5 8.5 Z" fill="#b0b0b0"/></svg>
<svg style="left:915px;top:504px;" width="6" height="6" viewBox="0 0 6 6"><circle cx="3" cy="3" r="2.2" fill="#777"/></svg>
<span class="t" style="left:955px;top:501px;font-size:11px;color:#f0f0f0;letter-spacing:-0.2px;">Renderir</span>
<svg style="left:830px;top:524px;" width="13" height="13" viewBox="0 0 13 13"><rect x="0.5" y="0.5" width="12" height="12" fill="#333" stroke="#5a5a5a"/><path d="M4 6.5 H9 M6.5 4 V9" stroke="#ccc" stroke-width="1"/></svg>
<span class="t" style="left:847px;top:522px;font-size:11px;color:#f0f0f0;letter-spacing:-0.2px;">Backgro...</span>
<div style="left:926px;top:521px;width:23px;height:18px;background:#3e3e3e;border:1px solid #5a5a5a;box-sizing:border-box;"></div>
<div style="left:951px;top:521px;width:27px;height:18px;background:#2b2b2b;border:1px solid #5a5a5a;box-sizing:border-box;"></div>
<span class="t" style="left:955px;top:522px;font-size:11px;color:#f0f0f0;">1 1</span>
<div style="left:981px;top:522px;width:18px;height:17px;background:#ffffff;"></div>
<span class="t" style="left:847px;top:545px;font-size:11px;color:#f0f0f0;letter-spacing:-0.2px;">Backgro...</span>
<div style="left:926px;top:544px;width:23px;height:18px;background:#3e3e3e;border:1px solid #5a5a5a;box-sizing:border-box;"></div>
<div style="left:951px;top:544px;width:49px;height:18px;background:#2b2b2b;border:1px solid #5a5a5a;box-sizing:border-box;"></div>
<span class="t" style="left:956px;top:545px;font-size:11px;color:#f0f0f0;">1</span>
<span class="t" style="left:847px;top:568px;font-size:11px;color:#f0f0f0;letter-spacing:-0.2px;">UI Screen</span>
<div style="left:926px;top:567px;width:23px;height:18px;background:#3e3e3e;border:1px solid #5a5a5a;box-sizing:border-box;"></div>
<span class="t" style="left:955px;top:570px;font-size:11px;color:#f0f0f0;letter-spacing:-0.2px;">(Null)</span>
<span class="t" style="left:847px;top:591px;font-size:11px;color:#f0f0f0;letter-spacing:-0.2px;">Mode</span>
<div style="left:926px;top:590px;width:23px;height:18px;background:#3e3e3e;border:1px solid #5a5a5a;box-sizing:border-box;"></div>
<div style="left:951px;top:590px;width:49px;height:18px;background:#3e3e3e;border:1px solid #5a5a5a;box-sizing:border-box;"></div>
<span class="t" style="left:956px;top:591px;font-size:11px;color:#f0f0f0;letter-spacing:-0.3px;">3D</span>
<svg style="left:986px;top:596px;" width="9" height="6" viewBox="0 0 9 6"><path d="M0.5 0.5 H8.5 L4.5 5 Z" fill="#a8a8a8"/></svg>
<span class="t" style="left:847px;top:614px;font-size:11px;color:#f0f0f0;letter-spacing:-0.2px;">Screen ...</span>
<div style="left:926px;top:613px;width:23px;height:18px;background:#3e3e3e;border:1px solid #5a5a5a;box-sizing:border-box;"></div>
<div style="left:951px;top:613px;width:49px;height:18px;background:#3e3e3e;border:1px solid #5a5a5a;box-sizing:border-box;"></div>
<span class="t" style="left:956px;top:614px;font-size:11px;color:#f0f0f0;letter-spacing:-0.3px;">Un...</span>
<svg style="left:986px;top:619px;" width="9" height="6" viewBox="0 0 9 6"><path d="M0.5 0.5 H8.5 L4.5 5 Z" fill="#a8a8a8"/></svg>
<div style="left:828px;top:634px;width:174px;height:17px;overflow:hidden;">
<span class="t" style="left:19px;top:3px;font-size:11px;color:#f0f0f0;letter-spacing:-0.2px">Camera ...</span>
<div style="left:98px;top:2px;width:23px;height:18px;background:#3e3e3e;border:1px solid #5a5a5a;box-sizing:border-box"></div>
<svg style="left:106px;top:7px" width="6" height="9" viewBox="0 0 6 9"><path d="M0.5 0.5 L5.5 4.5 L0.5 8.5 Z" fill="#b0b0b0"/></svg>
<svg style="left:87px;top:8px" width="6" height="6" viewBox="0 0 6 6"><circle cx="3" cy="3" r="2.2" fill="#777"/></svg>
<span class="t" style="left:127px;top:5px;font-size:11px;color:#f0f0f0;letter-spacing:-0.2px">Camera</span>
<div style="left:166px;top:5px;width:1px;height:12px;background:#3a6fc0"></div>
</div>
<div style="left:833px;top:659px;width:93px;height:26px;background:#3c3c3c;border:1px solid #5a5a5a;box-sizing:border-box;"></div>
<span class="t" style="left:870px;top:664px;font-size:11px;color:#f0f0f0;letter-spacing:-0.2px;">Info</span>
</body></html>
